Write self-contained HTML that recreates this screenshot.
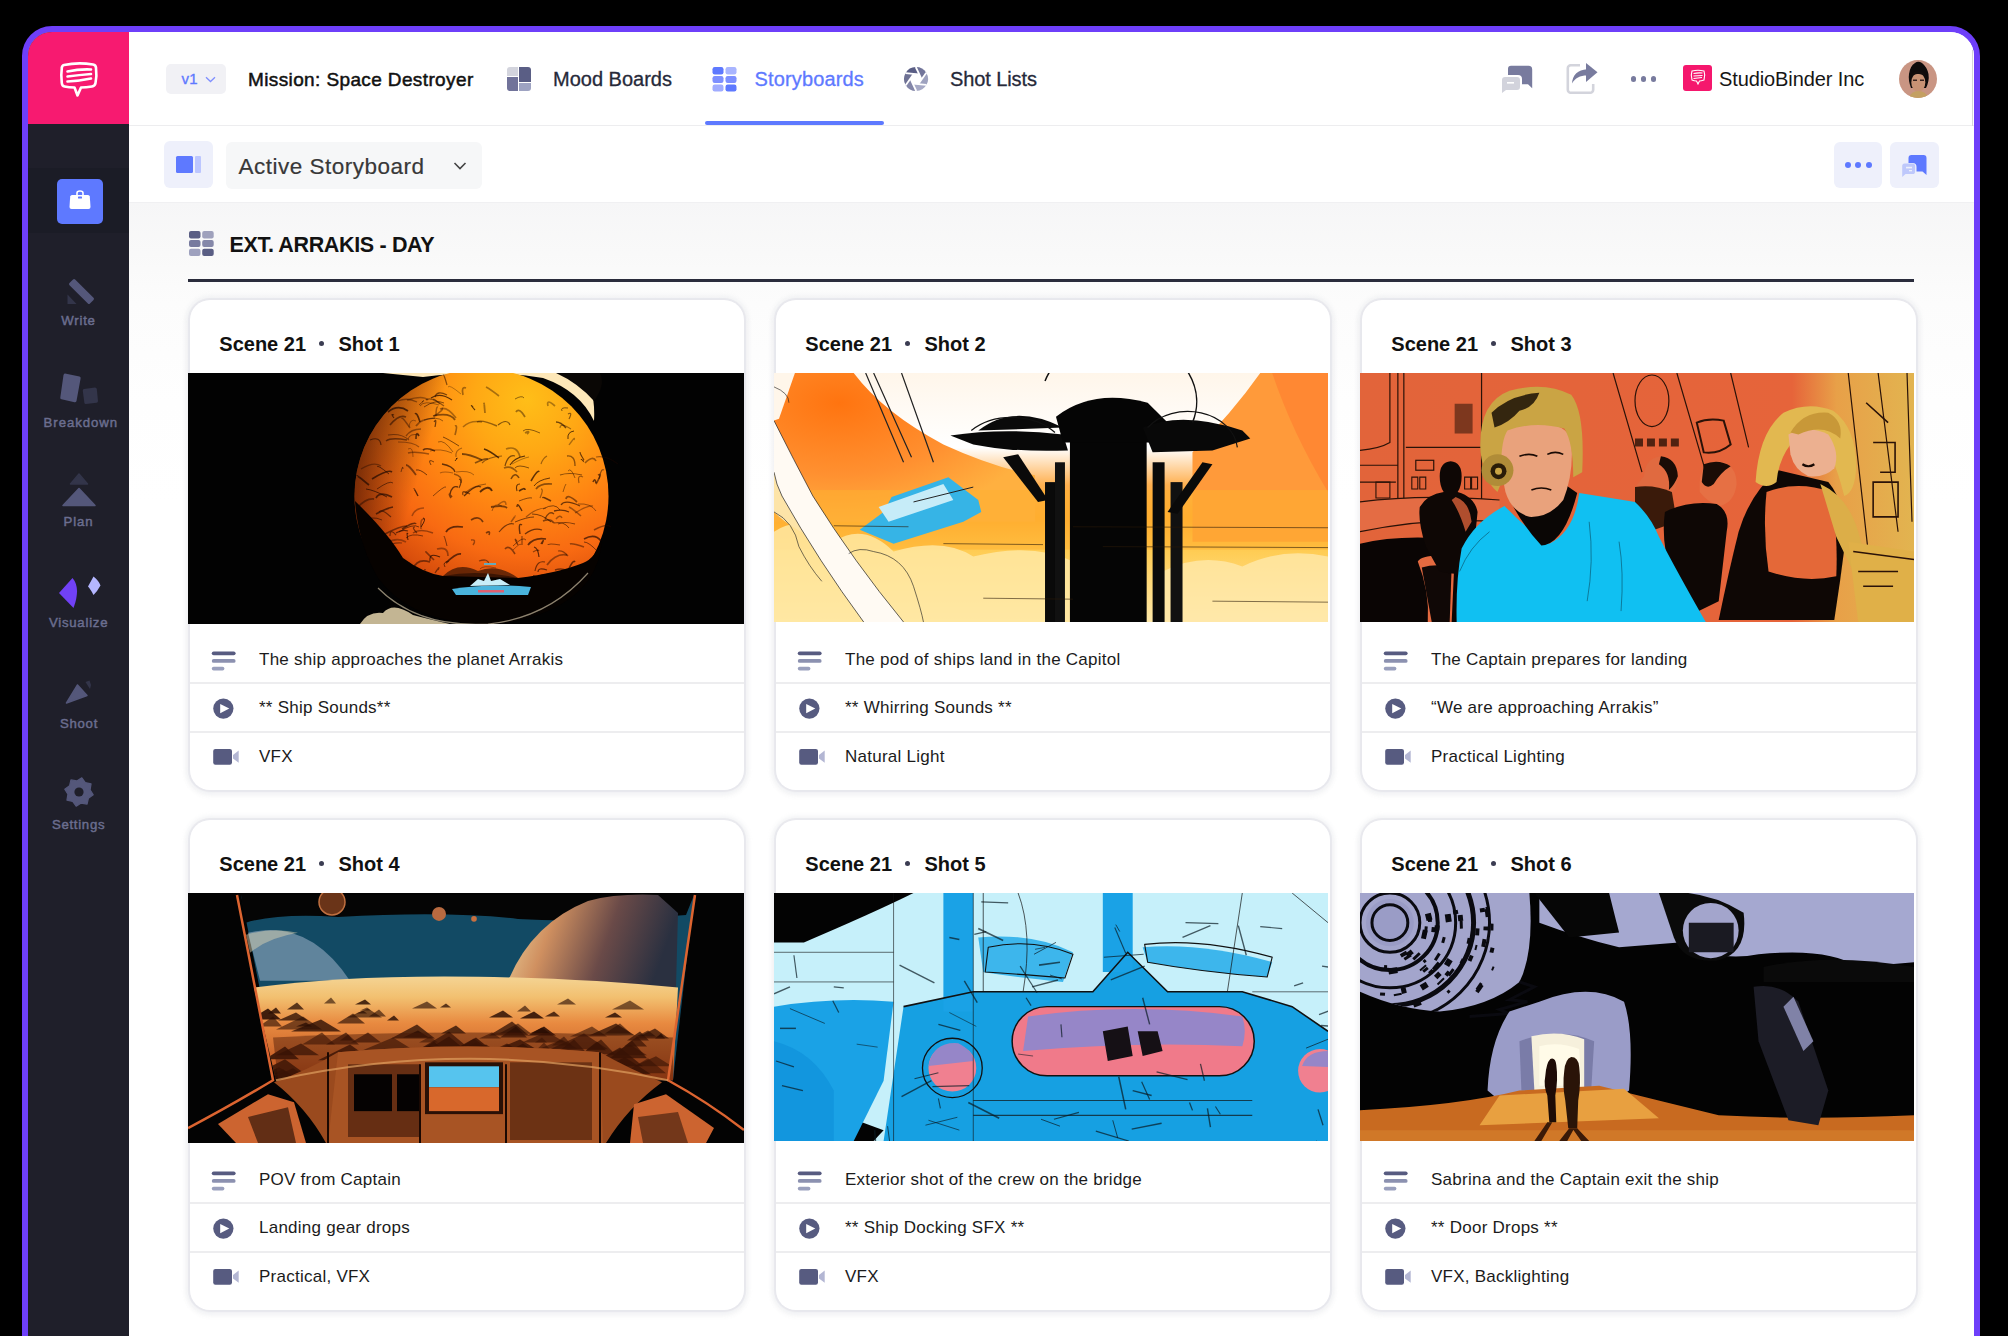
<!DOCTYPE html><html><head><meta charset="utf-8"><style>
*{margin:0;padding:0;box-sizing:border-box}
html,body{width:2008px;height:1336px;overflow:hidden;background:#000}
body{position:relative;font-family:"Liberation Sans",sans-serif}
.frame{position:absolute;left:22px;top:26px;width:1958px;height:1360px;border:6px solid #6e3ffa;border-radius:30px;overflow:hidden;background:#fff}
.inner{position:absolute;left:-28px;top:-32px;width:2008px;height:1336px}
.t{position:absolute;white-space:nowrap;line-height:1}
.r{position:absolute}
svg{position:absolute;overflow:visible}
</style></head><body>
<div class="frame"><div class="inner">
<div class="r" style="left:129px;top:203px;width:1845px;height:1133px;background:linear-gradient(#f6f6f7 0px,#f9f9f9 50px,#fcfcfc 100px,#fefefe 200px,#fff 300px);"></div>
<div class="r" style="left:129px;top:32px;width:1845px;height:93px;background:#fff;"></div>
<div class="r" style="left:129px;top:125px;width:1845px;height:1px;background:#ededef;"></div>
<div class="r" style="left:1972px;top:50px;width:1.2px;height:76px;background:#d6d6d8;"></div>
<div class="r" style="left:129px;top:126px;width:1845px;height:77px;background:#fff;"></div>
<div class="r" style="left:129px;top:202px;width:1845px;height:1px;background:#f0f0f2;"></div>
<div class="r" style="left:28px;top:32px;width:101px;height:1304px;background:#1f1f2a;"></div>
<div class="r" style="left:28px;top:168px;width:101px;height:65px;background:#1b1c26;"></div>
<div class="r" style="left:28px;top:32px;width:101px;height:92.4px;background:#f71a70;"></div>
<svg style="left:60px;top:62px" width="38" height="36" viewBox="0 0 38 36"><path d="M4 3 Q18 0 33 2.5 Q36 3 36 6 Q37 14 35.5 21 Q35 24 32 24.5 Q26 25.5 21 25.5 L17.5 33.5 L14.5 25.5 Q9 25.5 4.5 24.5 Q2 24 1.8 21 Q0.8 13 1.8 6 Q2 3.5 4 3Z" fill="none" stroke="#fff" stroke-width="2.6" stroke-linejoin="round"/><path d="M7.5 9.5 Q19 7 31 7.5 M7.5 14.5 Q19 13 31 12 M7.5 19.5 Q19 19 31 16.5" fill="none" stroke="#fff" stroke-width="2.6" stroke-linecap="round"/></svg>
<div class="r" style="left:57px;top:179px;width:46px;height:45px;background:#5e79ff;border-radius:5px"></div>
<svg style="left:69px;top:190px" width="22" height="20" viewBox="0 0 22 20"><path d="M8 5 V3 Q8 1 11 1 Q14 1 14 3 V5" fill="none" stroke="#fff" stroke-width="1.6"/><path d="M3 5 H19 Q20.5 5 20.8 6.5 L21.5 17 Q21.5 19 19.5 19 H2.5 Q0.5 19 0.5 17 L1.2 6.5 Q1.5 5 3 5Z" fill="#fff"/><rect x="9" y="6.5" width="4" height="2" rx="0.6" fill="#5e79ff"/></svg>
<svg style="left:64px;top:276px" width="32" height="32" viewBox="0 0 32 32"><rect x="-14.5" y="-4" width="29" height="8" rx="1.5" fill="#54577a" transform="translate(17.5,15.5) rotate(45)"/><path d="M3.5 18.5 L12.5 28 H3.5Z" fill="#33354a"/></svg>
<svg style="left:58px;top:371px" width="44" height="36" viewBox="0 0 44 36"><path d="M7 2.5 L21.5 5.5 Q23 6 22.6 7.6 L18.5 30 Q18 31.5 16.5 31.2 L3.5 28.3 Q2 28 2.3 26.4 L5.5 4 Q6 2.3 7 2.5Z" fill="#54577a"/><path d="M26 18 L37 16.5 Q38.5 16.5 38.8 18 L40 30 Q40 31.5 38.5 31.7 L28 33 Q26.5 33 26.3 31.5 L24.8 19.7 Q24.7 18.2 26 18Z" fill="#33354a"/></svg>
<svg style="left:60px;top:472px" width="38" height="36" viewBox="0 0 38 36"><path d="M19 2 L27.5 12 H10.5Z" fill="#33354a" stroke="#33354a" stroke-width="1.5" stroke-linejoin="round"/><path d="M19 16.5 L35 33.5 H3Z" fill="#54577a" stroke="#54577a" stroke-width="1.5" stroke-linejoin="round"/></svg>
<svg style="left:57px;top:574px" width="46" height="36" viewBox="0 0 46 36"><path d="M2 19 L15.5 4 Q24 14 16.5 34Z" fill="#7141f6"/><path d="M31 12.5 L36.5 2.5 Q42 7 43.5 11.5 Q40.5 17 36.5 21 Q33.5 15 31 12.5Z" fill="#b4b6ff"/></svg>
<svg style="left:62px;top:678px" width="34" height="30" viewBox="0 0 34 30"><path d="M4.5 25 L15.5 7 L25 17.5Z" fill="#54577a" stroke="#54577a" stroke-width="1.5" stroke-linejoin="round"/><path d="M23.5 4 L27.5 2.5 L29 7 L28 11Z" fill="#33354a"/></svg>
<svg style="left:64px;top:777px" width="30" height="30" viewBox="0 0 30 30"><polygon points="17.83,0.78 21.28,5.60 27.06,6.94 26.08,12.80 29.22,17.83 24.40,21.28 23.06,27.06 17.20,26.08 12.17,29.22 8.72,24.40 2.94,23.06 3.92,17.20 0.78,12.17 5.60,8.72 6.94,2.94 12.80,3.92" fill="#54577a" stroke="#54577a" stroke-width="1.2" stroke-linejoin="round"/><circle cx="15" cy="15" r="4.6" fill="#1f1f2a"/></svg>
<div class="t" style="left:-21.5px;width:200px;text-align:center;top:313.83px;font-size:13.2px;font-weight:400;color:#6b6e8f;letter-spacing:0.75px;-webkit-text-stroke:0.45px #6b6e8f;">Write</div>
<div class="t" style="left:-19.200000000000003px;width:200px;text-align:center;top:415.53px;font-size:13.2px;font-weight:400;color:#6b6e8f;letter-spacing:0.95px;-webkit-text-stroke:0.45px #6b6e8f;">Breakdown</div>
<div class="t" style="left:-21.5px;width:200px;text-align:center;top:514.83px;font-size:13.2px;font-weight:400;color:#6b6e8f;letter-spacing:0.85px;-webkit-text-stroke:0.45px #6b6e8f;">Plan</div>
<div class="t" style="left:-21.400000000000006px;width:200px;text-align:center;top:615.53px;font-size:13.2px;font-weight:400;color:#6b6e8f;letter-spacing:0.75px;-webkit-text-stroke:0.45px #6b6e8f;">Visualize</div>
<div class="t" style="left:-21px;width:200px;text-align:center;top:716.83px;font-size:13.2px;font-weight:400;color:#6b6e8f;letter-spacing:0.75px;-webkit-text-stroke:0.45px #6b6e8f;">Shoot</div>
<div class="t" style="left:-21.400000000000006px;width:200px;text-align:center;top:817.83px;font-size:13.2px;font-weight:400;color:#6b6e8f;letter-spacing:0.7px;-webkit-text-stroke:0.45px #6b6e8f;">Settings</div>
<div class="r" style="left:166px;top:64px;width:60px;height:30px;background:#f1f1f5;border-radius:5px"></div>
<div class="t " style="left:181.5px;top:71.30px;font-size:15px;font-weight:400;color:#5e79ff;letter-spacing:0.3px;-webkit-text-stroke:0.35px #5e79ff;">v1</div>
<svg style="left:205px;top:76px" width="11" height="7" viewBox="0 0 11 7"><path d="M1 1.2 L5.5 5.5 L10 1.2" fill="none" stroke="#8090ff" stroke-width="1.3"/></svg>
<div class="t " style="left:248px;top:69.92px;font-size:19px;font-weight:400;color:#111;letter-spacing:0.38px;-webkit-text-stroke:0.5px #111;">Mission: Space Destroyer</div>
<svg style="left:507px;top:67px" width="24" height="24" viewBox="0 0 24 24"><path d="M3 0 H11 V9 H0 V3 A3 3 0 0 1 3 0Z" fill="#d3d4dd"/><path d="M12 0 H21 A3 3 0 0 1 24 3 V15 H12Z" fill="#5a5e85"/><path d="M0 10 H11 V24 H3 A3 3 0 0 1 0 21Z" fill="#71739a"/><path d="M12 16 H24 V21 A3 3 0 0 1 21 24 H12Z" fill="#9ea3c2"/></svg>
<div class="t " style="left:553px;top:69.07px;font-size:20px;font-weight:400;color:#262939;letter-spacing:0.0px;-webkit-text-stroke:0.3px #262939;">Mood Boards</div>
<svg style="left:712px;top:67px" width="25" height="25" viewBox="0 0 25 25"><rect x="0.5" y="0" width="11" height="7.5" rx="2.2" fill="#5e79ff"/><rect x="13.5" y="0" width="11" height="7.5" rx="2.2" fill="#a9b5ff"/><rect x="0.5" y="9" width="11" height="7" rx="2.2" fill="#7d8fff"/><rect x="13.5" y="9" width="11" height="7" rx="2.2" fill="#7d8fff"/><rect x="0.5" y="17.5" width="11" height="7" rx="2.2" fill="#a0acff"/><rect x="13.5" y="17.5" width="11" height="7" rx="2.2" fill="#5e79ff"/></svg>
<div class="t " style="left:754.5px;top:69.07px;font-size:20px;font-weight:400;color:#5e79ff;letter-spacing:0.15px;-webkit-text-stroke:0.3px #5e79ff;">Storyboards</div>
<div class="r" style="left:705px;top:120.5px;width:179px;height:4.5px;background:#5e79ff;border-radius:2px"></div>
<svg style="left:904px;top:67px" width="24" height="24" viewBox="-12 -12 24 24"><g transform="scale(-1,1)"><path d="M3.21 4.59 L-0.24 12.00 A12 12 0 0 1 -10.51 5.79 L-2.37 5.08 Z" fill="#a7aac6"/><path d="M-2.37 5.08 L-10.51 5.79 A12 12 0 0 1 -10.27 -6.21 L-5.58 0.49 Z" fill="#9ea2bf"/><path d="M-5.58 0.49 L-10.27 -6.21 A12 12 0 0 1 0.24 -12.00 L-3.21 -4.59 Z" fill="#72759a"/><path d="M-3.21 -4.59 L0.24 -12.00 A12 12 0 0 1 10.51 -5.79 L2.37 -5.08 Z" fill="#5a5e85"/><path d="M2.37 -5.08 L10.51 -5.79 A12 12 0 0 1 10.27 6.21 L5.58 -0.49 Z" fill="#6e7194"/><path d="M5.58 -0.49 L10.27 6.21 A12 12 0 0 1 -0.24 12.00 L3.21 4.59 Z" fill="#8386a8"/><line x1="5.58" y1="-0.49" x2="-0.24" y2="12.00" stroke="#fff" stroke-width="1.8"/><line x1="3.21" y1="4.59" x2="-10.51" y2="5.79" stroke="#fff" stroke-width="1.8"/><line x1="-2.37" y1="5.08" x2="-10.27" y2="-6.21" stroke="#fff" stroke-width="1.8"/><line x1="-5.58" y1="0.49" x2="0.24" y2="-12.00" stroke="#fff" stroke-width="1.8"/><line x1="-3.21" y1="-4.59" x2="10.51" y2="-5.79" stroke="#fff" stroke-width="1.8"/><line x1="2.37" y1="-5.08" x2="10.27" y2="6.21" stroke="#fff" stroke-width="1.8"/></g></svg>
<div class="t " style="left:950px;top:69.07px;font-size:20px;font-weight:400;color:#262939;letter-spacing:-0.1px;-webkit-text-stroke:0.3px #262939;">Shot Lists</div>
<svg style="left:1502px;top:65px" width="31" height="28" viewBox="0 0 31 28"><path d="M9 0.8 H26.5 A3.7 3.7 0 0 1 30.2 4.5 V23.2 L26 19.2 H20 V14 A4 4 0 0 0 16 10 H6 V3.8 A3 3 0 0 1 9 0.8Z" fill="#787b9e"/><path d="M3 12 H15 A3 3 0 0 1 18 15 V22 A3 3 0 0 1 15 25 H4 L0 28 V15 A3 3 0 0 1 3 12Z" fill="#d2d3dc"/><rect x="5" y="17" width="7" height="1.6" fill="#fff"/></svg>
<svg style="left:1560px;top:60px" width="40" height="36" viewBox="0 0 40 36"><path d="M20 5.3 H11 A3 3 0 0 0 7.8 8.5 V29.5 A3 3 0 0 0 11 32.7 H30 A3 3 0 0 0 33.2 29.5 V24" fill="none" stroke="#d3d4dc" stroke-width="2.6"/><path d="M26 3 L37.5 12.3 L26 22Z" fill="#787b9e"/><path d="M12 23.5 C12.5 15 18 9.8 27 9.3 V15.5 C20 15.5 15 18 12 23.5Z" fill="#787b9e"/></svg>
<div class="r" style="left:1630.7px;top:76px;width:5.6px;height:5.6px;border-radius:50%;background:#787b9e"></div>
<div class="r" style="left:1640.7px;top:76px;width:5.6px;height:5.6px;border-radius:50%;background:#787b9e"></div>
<div class="r" style="left:1650.7px;top:76px;width:5.6px;height:5.6px;border-radius:50%;background:#787b9e"></div>
<div class="r" style="left:1683px;top:65px;width:29px;height:26px;background:#f5176d;border-radius:3px"></div>
<svg style="left:1689px;top:69px" width="18" height="18" viewBox="0 0 18 18"><path d="M3 2 Q9 0.5 15 2 Q16.5 6 15 11 Q12 12 10.5 12 L9 15 L7.5 12 Q5 12 3 11 Q1.5 6 3 2Z" fill="none" stroke="#fff" stroke-width="1.1"/><path d="M4.5 4.5 Q9 3.5 13.5 4 M4.5 7 Q9 6.5 13.5 6.5 M4.5 9.5 Q9 9 13 8.5" fill="none" stroke="#fff" stroke-width="1.1"/></svg>
<div class="t " style="left:1719px;top:69.07px;font-size:20px;font-weight:400;color:#161616;letter-spacing:-0.1px;">StudioBinder Inc</div>
<div class="r" style="left:1899px;top:59.5px;width:38px;height:38px;border-radius:50%;overflow:hidden;background:#c99583"><svg style="left:0;top:0" width="38" height="38" viewBox="0 0 38 38"><path d="M12 28 Q9 20 10 14 Q11 6 16 3 Q19 0.5 23 3 Q28 7 29.5 14 Q30.5 21 27 28Z" fill="#0e0b0b"/><ellipse cx="19.3" cy="22.5" rx="7" ry="9.5" fill="#c89274"/><path d="M12 17 Q13 11 19 11 Q26 11 27 17 Q23 13.5 19 14 Q15 13.5 12 17Z" fill="#120d0c"/><rect x="14" y="19.5" width="4" height="1.5" fill="#3a2420"/><rect x="21" y="19.5" width="4" height="1.5" fill="#3a2420"/><path d="M10 38 Q12 31 19.3 31 Q27 31 29 38Z" fill="#c4a062"/></svg></div>
<div class="r" style="left:164px;top:141px;width:49px;height:47px;background:#eef0fb;border-radius:6px"></div>
<div class="r" style="left:176px;top:156px;width:16.5px;height:17px;background:#5e79ff;border-radius:1.5px"></div>
<div class="r" style="left:195px;top:156px;width:6px;height:17px;background:#bcc6ff;border-radius:1px"></div>
<div class="r" style="left:226px;top:142px;width:256px;height:47px;background:#f6f7f8;border-radius:6px"></div>
<div class="t " style="left:238.5px;top:155.95px;font-size:22.5px;font-weight:400;color:#383838;letter-spacing:0.5px;-webkit-text-stroke:0.2px #383838;">Active Storyboard</div>
<svg style="left:453px;top:161px" width="14" height="10" viewBox="0 0 14 10"><path d="M1.5 2 L7 7.5 L12.5 2" fill="none" stroke="#444" stroke-width="1.6"/></svg>
<div class="r" style="left:1834px;top:142px;width:48px;height:46px;background:#eef0fb;border-radius:6px"></div>
<div class="r" style="left:1844.5px;top:162px;width:6px;height:6px;border-radius:50%;background:#5e79ff"></div>
<div class="r" style="left:1855.2px;top:162px;width:6px;height:6px;border-radius:50%;background:#5e79ff"></div>
<div class="r" style="left:1865.9px;top:162px;width:6px;height:6px;border-radius:50%;background:#5e79ff"></div>
<div class="r" style="left:1890px;top:142px;width:48.5px;height:46px;background:#eef0fb;border-radius:6px"></div>
<svg style="left:1902px;top:154px" width="26" height="24" viewBox="0 0 26 24"><path d="M9.5 1 H21.5 A3 3 0 0 1 24.5 4 V21 L20.5 17.5 H14.5 V13 A4 4 0 0 0 10.5 9 H6.5 V4 A3 3 0 0 1 9.5 1Z" fill="#5e79ff"/><path d="M3 9.5 H10.5 A2.6 2.6 0 0 1 13.1 12.1 V17.5 A2.6 2.6 0 0 1 10.5 20.1 H3.5 L0.2 23 V12.1 A2.6 2.6 0 0 1 3 9.5Z" fill="#bec8fb"/><rect x="4" y="12.8" width="6" height="1.6" fill="#eef0fb"/><rect x="7" y="16" width="3" height="1.3" fill="#eef0fb"/></svg>
<svg style="left:189px;top:231px" width="25" height="25" viewBox="0 0 25 25"><rect x="0" y="0" width="11.5" height="7.5" rx="2" fill="#5a5e84"/><rect x="13.2" y="0" width="11.5" height="7.5" rx="2" fill="#9fa1bc"/><rect x="0" y="9" width="11.5" height="7" rx="2" fill="#777a9e"/><rect x="13.2" y="9" width="11.5" height="7" rx="2" fill="#8588a9"/><rect x="0" y="17.8" width="11.5" height="7.2" rx="2" fill="#9ea1be"/><rect x="13.2" y="17.8" width="11.5" height="7.2" rx="2" fill="#5a5e84"/></svg>
<div class="t " style="left:229.5px;top:234.80px;font-size:21.5px;font-weight:700;color:#121212;letter-spacing:-0.35px;">EXT. ARRAKIS - DAY</div>
<div class="r" style="left:188px;top:279px;width:1726px;height:3px;background:#2a2c3c;"></div>
<div class="r" style="left:190px;top:300px;width:554px;height:490px;background:#fff;border-radius:20px;box-shadow:0 0 0 2px rgba(226,227,233,0.6),0 0 5px 4px rgba(226,227,233,0.4),0 3px 9px 2px rgba(40,40,70,0.035)"></div>
<svg style="left:188px;top:373px" width="556" height="251" viewBox="0 0 556 251" preserveAspectRatio="none"><defs><clipPath id="cl0"><rect width="556" height="251"/></clipPath></defs><g clip-path="url(#cl0)"><rect width="556" height="251" fill="#020202"/><defs><radialGradient id="pl1" cx="0.68" cy="0.12" r="0.95"><stop offset="0" stop-color="#ffbe18"/><stop offset="0.22" stop-color="#ffa814"/><stop offset="0.45" stop-color="#ff8612"/><stop offset="0.65" stop-color="#f86a12"/><stop offset="0.82" stop-color="#d84e0c"/><stop offset="1" stop-color="#3a1002"/></radialGradient></defs><path d="M195 0 H392 Q408 14 406 48 Q392 18 355 5 Q300 -4 235 4 Z" fill="#fde7b8"/><path d="M368 0 H412 Q418 12 406 28 Q390 10 368 0Z" fill="#0a0705"/><path d="M172 251 Q180 238 195 240 Q205 228 225 242 Q240 246 262 251Z" fill="#f4e2b8" opacity="0.8"/><circle cx="293.5" cy="123" r="127" fill="url(#pl1)"/><path d="M251 32 q-15 -5 -19 1" fill="none" stroke="#1e0800" stroke-width="0.8" opacity="0.50"/><path d="M278 15 q-5 -2 -3 7" fill="none" stroke="#1e0800" stroke-width="1.7" opacity="0.40"/><path d="M314 83 q-14 1 -20 7" fill="none" stroke="#1e0800" stroke-width="1.1" opacity="0.47"/><path d="M374 38 q-2 -4 6 -3" fill="none" stroke="#1e0800" stroke-width="1.0" opacity="0.57"/><path d="M316 95 q7 -3 13 4" fill="none" stroke="#1e0800" stroke-width="1.7" opacity="0.45"/><path d="M352 60 q-13 -6 -17 -2" fill="none" stroke="#1e0800" stroke-width="0.8" opacity="0.65"/><path d="M337 161 q9 -7 17 -4" fill="none" stroke="#1e0800" stroke-width="1.3" opacity="0.63"/><path d="M380 198 q5 -12 7 -9" fill="none" stroke="#1e0800" stroke-width="1.6" opacity="0.63"/><path d="M241 81 q-15 -3 -21 -1" fill="none" stroke="#1e0800" stroke-width="1.6" opacity="0.42"/><path d="M202 52 q9 -11 16 -8" fill="none" stroke="#1e0800" stroke-width="1.6" opacity="0.53"/><path d="M386 58 q-7 1 -6 8" fill="none" stroke="#1e0800" stroke-width="1.0" opacity="0.73"/><path d="M228 102 q-7 -10 -10 -10" fill="none" stroke="#1e0800" stroke-width="1.8" opacity="0.52"/><path d="M343 108 q7 -12 8 -9" fill="none" stroke="#1e0800" stroke-width="1.6" opacity="0.71"/><path d="M268 84 q-1 -7 6 -9" fill="none" stroke="#1e0800" stroke-width="1.1" opacity="0.38"/><path d="M389 129 q-10 -9 -11 -3" fill="none" stroke="#1e0800" stroke-width="1.8" opacity="0.50"/><path d="M286 102 q-5 -5 -18 -3" fill="none" stroke="#1e0800" stroke-width="0.8" opacity="0.46"/><path d="M408 111 q7 -12 2 -9" fill="none" stroke="#1e0800" stroke-width="1.5" opacity="0.56"/><path d="M235 77 q4 -3 12 1" fill="none" stroke="#1e0800" stroke-width="1.6" opacity="0.66"/><path d="M372 172 q-12 -2 -12 0" fill="none" stroke="#1e0800" stroke-width="1.1" opacity="0.49"/><path d="M235 145 q4 0 -2 9" fill="none" stroke="#1e0800" stroke-width="1.0" opacity="0.75"/><path d="M227 41 q2 -2 5 8" fill="none" stroke="#1e0800" stroke-width="1.6" opacity="0.69"/><path d="M191 139 q2 -4 12 5" fill="none" stroke="#1e0800" stroke-width="1.1" opacity="0.54"/><path d="M370 204 q-6 2 -4 9" fill="none" stroke="#1e0800" stroke-width="1.0" opacity="0.64"/><path d="M396 169 q5 -0 14 10" fill="none" stroke="#1e0800" stroke-width="0.9" opacity="0.61"/><path d="M332 111 q-5 0 -3 7" fill="none" stroke="#1e0800" stroke-width="1.1" opacity="0.68"/><path d="M230 123 q-4 -8 -4 -7" fill="none" stroke="#1e0800" stroke-width="1.4" opacity="0.71"/><path d="M396 88 q-6 -4 0 1" fill="none" stroke="#1e0800" stroke-width="1.0" opacity="0.56"/><path d="M213 99 q2 -8 2 -3" fill="none" stroke="#1e0800" stroke-width="0.9" opacity="0.56"/><path d="M310 52 q9 -7 12 0" fill="none" stroke="#1e0800" stroke-width="1.2" opacity="0.57"/><path d="M323 106 q4 -8 8 -1" fill="none" stroke="#1e0800" stroke-width="1.5" opacity="0.56"/><path d="M389 198 q-3 2 3 9" fill="none" stroke="#1e0800" stroke-width="1.2" opacity="0.69"/><path d="M188 141 q11 -6 17 -7" fill="none" stroke="#1e0800" stroke-width="1.7" opacity="0.64"/><path d="M408 84 q10 -2 22 7" fill="none" stroke="#1e0800" stroke-width="1.1" opacity="0.41"/><path d="M219 67 q-16 -3 -21 1" fill="none" stroke="#1e0800" stroke-width="1.4" opacity="0.53"/><path d="M298 14 q4 2 13 9" fill="none" stroke="#1e0800" stroke-width="1.6" opacity="0.39"/><path d="M238 27 q5 -4 18 6" fill="none" stroke="#1e0800" stroke-width="1.4" opacity="0.45"/><path d="M405 133 q-5 -1 -18 7" fill="none" stroke="#1e0800" stroke-width="1.1" opacity="0.38"/><path d="M308 195 q-13 -3 -16 1" fill="none" stroke="#1e0800" stroke-width="0.9" opacity="0.45"/><path d="M220 66 q2 -6 11 -4" fill="none" stroke="#1e0800" stroke-width="0.8" opacity="0.55"/><path d="M353 116 q3 -0 -1 9" fill="none" stroke="#1e0800" stroke-width="1.3" opacity="0.39"/><path d="M379 83 q8 -1 8 10" fill="none" stroke="#1e0800" stroke-width="1.4" opacity="0.49"/><path d="M271 73 q-11 -7 -16 -9" fill="none" stroke="#1e0800" stroke-width="0.9" opacity="0.65"/><path d="M380 183 q-5 -6 -10 -5" fill="none" stroke="#1e0800" stroke-width="1.2" opacity="0.47"/><path d="M236 202 q-1 -7 2 -5" fill="none" stroke="#1e0800" stroke-width="0.8" opacity="0.74"/><path d="M265 100 q-9 -2 -13 0" fill="none" stroke="#1e0800" stroke-width="1.2" opacity="0.35"/><path d="M246 49 q3 -5 1 5" fill="none" stroke="#1e0800" stroke-width="1.2" opacity="0.61"/><path d="M252 207 q9 -6 10 3" fill="none" stroke="#1e0800" stroke-width="1.4" opacity="0.37"/><path d="M353 171 q4 -7 1 0" fill="none" stroke="#1e0800" stroke-width="1.4" opacity="0.68"/><path d="M393 143 q-8 -7 -12 -9" fill="none" stroke="#1e0800" stroke-width="1.6" opacity="0.40"/><path d="M310 132 q8 -7 8 -0" fill="none" stroke="#1e0800" stroke-width="1.3" opacity="0.35"/><path d="M304 138 q2 -9 10 -5" fill="none" stroke="#1e0800" stroke-width="1.0" opacity="0.38"/><path d="M355 205 q1 -6 -5 -0" fill="none" stroke="#1e0800" stroke-width="1.4" opacity="0.62"/><path d="M233 156 q-1 -11 3 -10" fill="none" stroke="#1e0800" stroke-width="1.5" opacity="0.37"/><path d="M339 61 q4 -4 -2 -1" fill="none" stroke="#1e0800" stroke-width="1.8" opacity="0.40"/><path d="M285 172 q4 -6 -2 -5" fill="none" stroke="#1e0800" stroke-width="1.4" opacity="0.43"/><path d="M205 110 q-3 -3 -16 6" fill="none" stroke="#1e0800" stroke-width="1.0" opacity="0.55"/><path d="M394 102 q-13 -3 -22 -0" fill="none" stroke="#1e0800" stroke-width="1.1" opacity="0.53"/><path d="M249 176 q11 -3 11 7" fill="none" stroke="#1e0800" stroke-width="1.7" opacity="0.40"/><path d="M242 78 q10 -3 22 2" fill="none" stroke="#1e0800" stroke-width="0.8" opacity="0.49"/><path d="M195 175 q10 -6 19 -5" fill="none" stroke="#1e0800" stroke-width="1.2" opacity="0.46"/><path d="M373 132 q4 -6 19 1" fill="none" stroke="#1e0800" stroke-width="1.3" opacity="0.64"/><path d="M358 135 q-10 0 -20 9" fill="none" stroke="#1e0800" stroke-width="1.1" opacity="0.40"/><path d="M355 205 q2 -5 7 -4" fill="none" stroke="#1e0800" stroke-width="1.0" opacity="0.57"/><path d="M222 190 q-7 1 -12 8" fill="none" stroke="#1e0800" stroke-width="1.0" opacity="0.75"/><path d="M193 72 q-1 -9 -11 -5" fill="none" stroke="#1e0800" stroke-width="1.2" opacity="0.58"/><path d="M273 110 q2 -7 -7 -9" fill="none" stroke="#1e0800" stroke-width="1.3" opacity="0.46"/><path d="M327 181 q-6 -10 -10 -5" fill="none" stroke="#1e0800" stroke-width="1.6" opacity="0.51"/><path d="M178 149 q-2 -7 -1 2" fill="none" stroke="#1e0800" stroke-width="1.6" opacity="0.35"/><path d="M384 204 q-6 -11 -17 -7" fill="none" stroke="#1e0800" stroke-width="1.5" opacity="0.56"/><path d="M332 161 q-2 -12 2 -9" fill="none" stroke="#1e0800" stroke-width="1.4" opacity="0.66"/><path d="M246 27 q-2 -3 6 4" fill="none" stroke="#1e0800" stroke-width="1.4" opacity="0.39"/><path d="M267 47 q-5 -8 -22 -4" fill="none" stroke="#1e0800" stroke-width="1.7" opacity="0.53"/><path d="M289 49 q4 -3 20 4" fill="none" stroke="#1e0800" stroke-width="1.5" opacity="0.47"/><path d="M275 54 q7 -7 19 -5" fill="none" stroke="#1e0800" stroke-width="1.5" opacity="0.36"/><path d="M220 167 q-2 -10 0 -6" fill="none" stroke="#1e0800" stroke-width="1.0" opacity="0.74"/><path d="M225 160 q7 -5 20 -0" fill="none" stroke="#1e0800" stroke-width="1.5" opacity="0.42"/><path d="M268 45 q-9 -12 -16 -9" fill="none" stroke="#1e0800" stroke-width="1.7" opacity="0.37"/><path d="M353 209 q-1 -5 -8 -6" fill="none" stroke="#1e0800" stroke-width="1.5" opacity="0.72"/><path d="M265 79 q-9 -13 -15 -10" fill="none" stroke="#1e0800" stroke-width="0.9" opacity="0.46"/><path d="M259 173 q-3 -12 -3 -9" fill="none" stroke="#1e0800" stroke-width="1.0" opacity="0.54"/><path d="M261 188 q-7 1 -4 6" fill="none" stroke="#1e0800" stroke-width="0.9" opacity="0.66"/><path d="M357 189 q-8 -2 -10 9" fill="none" stroke="#1e0800" stroke-width="1.1" opacity="0.60"/><path d="M359 192 q9 -12 20 -10" fill="none" stroke="#1e0800" stroke-width="1.8" opacity="0.44"/><path d="M267 53 q3 -2 -0 9" fill="none" stroke="#1e0800" stroke-width="1.6" opacity="0.42"/><path d="M363 128 q-9 -5 -8 -3" fill="none" stroke="#1e0800" stroke-width="1.6" opacity="0.66"/><path d="M178 116 q8 1 21 8" fill="none" stroke="#1e0800" stroke-width="0.9" opacity="0.75"/><path d="M295 149 q-4 -7 -12 -2" fill="none" stroke="#1e0800" stroke-width="1.6" opacity="0.60"/><path d="M336 25 q-2 -3 -9 1" fill="none" stroke="#1e0800" stroke-width="1.0" opacity="0.50"/><path d="M231 32 q8 -7 3 -3" fill="none" stroke="#1e0800" stroke-width="1.0" opacity="0.51"/><path d="M372 137 q-5 -8 -17 -1" fill="none" stroke="#1e0800" stroke-width="0.8" opacity="0.68"/><path d="M243 25 q9 -6 21 2" fill="none" stroke="#1e0800" stroke-width="1.2" opacity="0.72"/><path d="M235 163 q-12 -3 -17 2" fill="none" stroke="#1e0800" stroke-width="0.9" opacity="0.60"/><path d="M221 54 q1 -9 7 -6" fill="none" stroke="#1e0800" stroke-width="1.0" opacity="0.35"/><path d="M248 43 q-0 -10 2 -9" fill="none" stroke="#1e0800" stroke-width="1.4" opacity="0.39"/><path d="M247 200 q6 -9 3 -3" fill="none" stroke="#1e0800" stroke-width="1.2" opacity="0.52"/><path d="M219 153 q-7 -0 -22 8" fill="none" stroke="#1e0800" stroke-width="1.7" opacity="0.52"/><path d="M285 34 q-4 -4 2 3" fill="none" stroke="#1e0800" stroke-width="1.2" opacity="0.71"/><path d="M296 31 q0 -3 1 9" fill="none" stroke="#1e0800" stroke-width="1.8" opacity="0.39"/><path d="M219 27 q16 -5 21 -0" fill="none" stroke="#1e0800" stroke-width="1.7" opacity="0.37"/><path d="M325 173 q10 -10 13 -6" fill="none" stroke="#1e0800" stroke-width="1.0" opacity="0.51"/><path d="M225 84 q0 -11 -5 -8" fill="none" stroke="#1e0800" stroke-width="0.8" opacity="0.45"/><path d="M311 159 q8 -10 15 -8" fill="none" stroke="#1e0800" stroke-width="1.1" opacity="0.59"/><path d="M275 122 q-2 -6 7 -1" fill="none" stroke="#1e0800" stroke-width="1.3" opacity="0.53"/><path d="M229 160 q-6 -6 -2 -6" fill="none" stroke="#1e0800" stroke-width="1.2" opacity="0.54"/><path d="M193 93 q-7 -5 -20 3" fill="none" stroke="#1e0800" stroke-width="1.3" opacity="0.38"/><path d="M184 106 q16 -10 20 -7" fill="none" stroke="#1e0800" stroke-width="1.6" opacity="0.69"/><path d="M218 206 q14 -3 20 8" fill="none" stroke="#1e0800" stroke-width="0.9" opacity="0.42"/><path d="M258 159 q4 -7 17 -5" fill="none" stroke="#1e0800" stroke-width="1.7" opacity="0.68"/><path d="M222 55 q-8 -12 -8 -9" fill="none" stroke="#1e0800" stroke-width="1.5" opacity="0.42"/><path d="M303 134 q13 -2 16 1" fill="none" stroke="#1e0800" stroke-width="1.8" opacity="0.58"/><path d="M327 83 q-7 -2 -10 10" fill="none" stroke="#1e0800" stroke-width="1.2" opacity="0.58"/><path d="M214 156 q13 -8 14 -5" fill="none" stroke="#1e0800" stroke-width="1.5" opacity="0.61"/><path d="M324 91 q11 -6 17 -7" fill="none" stroke="#1e0800" stroke-width="0.8" opacity="0.44"/><path d="M259 22 q-10 -5 -12 2" fill="none" stroke="#1e0800" stroke-width="1.3" opacity="0.59"/><path d="M204 197 q-3 -11 -15 -8" fill="none" stroke="#1e0800" stroke-width="1.2" opacity="0.61"/><path d="M331 118 q6 -4 6 -1" fill="none" stroke="#1e0800" stroke-width="1.7" opacity="0.72"/><path d="M181 112 q-12 -10 -12 -9" fill="none" stroke="#1e0800" stroke-width="1.7" opacity="0.66"/><path d="M206 42 q-4 -2 0 3" fill="none" stroke="#1e0800" stroke-width="1.1" opacity="0.68"/><path d="M366 150 q10 -2 15 5" fill="none" stroke="#1e0800" stroke-width="1.0" opacity="0.54"/><path d="M357 146 q4 -9 9 -5" fill="none" stroke="#1e0800" stroke-width="1.3" opacity="0.57"/><path d="M236 135 q-9 0 -12 8" fill="none" stroke="#1e0800" stroke-width="1.5" opacity="0.36"/><path d="M406 157 q13 -7 17 -3" fill="none" stroke="#1e0800" stroke-width="1.5" opacity="0.45"/><path d="M336 206 q7 -4 15 4" fill="none" stroke="#1e0800" stroke-width="1.4" opacity="0.69"/><path d="M247 45 q-15 1 -19 8" fill="none" stroke="#1e0800" stroke-width="1.7" opacity="0.41"/><path d="M256 30 q-8 -4 -20 4" fill="none" stroke="#1e0800" stroke-width="0.9" opacity="0.60"/><path d="M318 76 q11 -4 14 8" fill="none" stroke="#1e0800" stroke-width="1.7" opacity="0.38"/><path d="M382 171 q2 -1 14 3" fill="none" stroke="#1e0800" stroke-width="1.6" opacity="0.46"/><path d="M221 67 q-8 -7 -21 -5" fill="none" stroke="#1e0800" stroke-width="1.1" opacity="0.46"/><path d="M411 106 q2 -11 5 -9" fill="none" stroke="#1e0800" stroke-width="1.1" opacity="0.52"/><path d="M346 113 q4 -6 16 -8" fill="none" stroke="#1e0800" stroke-width="1.0" opacity="0.68"/><path d="M361 205 q-4 -5 -0 -0" fill="none" stroke="#1e0800" stroke-width="1.1" opacity="0.67"/><path d="M378 55 q-5 -6 -10 -6" fill="none" stroke="#1e0800" stroke-width="1.4" opacity="0.63"/><path d="M190 165 q5 -3 13 3" fill="none" stroke="#1e0800" stroke-width="1.7" opacity="0.49"/><path d="M192 187 q-6 -7 -13 -5" fill="none" stroke="#1e0800" stroke-width="1.7" opacity="0.71"/><path d="M228 97 q4 -1 11 5" fill="none" stroke="#1e0800" stroke-width="1.0" opacity="0.61"/><path d="M381 139 q-6 -3 -15 -1" fill="none" stroke="#1e0800" stroke-width="1.3" opacity="0.66"/><path d="M218 63 q5 -7 15 -7" fill="none" stroke="#1e0800" stroke-width="1.3" opacity="0.41"/><path d="M210 69 q16 -0 21 5" fill="none" stroke="#1e0800" stroke-width="1.2" opacity="0.39"/><path d="M353 91 q2 -6 6 -8" fill="none" stroke="#1e0800" stroke-width="1.2" opacity="0.43"/><path d="M368 146 q4 -5 6 -1" fill="none" stroke="#1e0800" stroke-width="1.5" opacity="0.41"/><path d="M397 90 q8 -8 11 -2" fill="none" stroke="#1e0800" stroke-width="1.6" opacity="0.44"/><path d="M345 179 q5 -3 6 -1" fill="none" stroke="#1e0800" stroke-width="1.2" opacity="0.48"/><path d="M366 150 q-4 -5 -11 -2" fill="none" stroke="#1e0800" stroke-width="1.5" opacity="0.53"/><path d="M334 163 q0 2 -0 9" fill="none" stroke="#1e0800" stroke-width="1.6" opacity="0.37"/><path d="M405 109 q2 -5 3 1" fill="none" stroke="#1e0800" stroke-width="1.6" opacity="0.64"/><path d="M300 86 q-3 -1 -13 4" fill="none" stroke="#1e0800" stroke-width="1.8" opacity="0.51"/><path d="M259 12 q-3 -11 -4 -10" fill="none" stroke="#1e0800" stroke-width="1.2" opacity="0.52"/><path d="M236 47 q13 -4 19 1" fill="none" stroke="#1e0800" stroke-width="1.0" opacity="0.44"/><path d="M202 163 q-0 -8 6 -1" fill="none" stroke="#1e0800" stroke-width="1.2" opacity="0.57"/><path d="M330 172 q-5 -9 -1 -4" fill="none" stroke="#1e0800" stroke-width="1.2" opacity="0.57"/><path d="M383 56 q-11 -7 -11 -1" fill="none" stroke="#1e0800" stroke-width="1.1" opacity="0.42"/><path d="M231 63 q-3 -6 -3 3" fill="none" stroke="#1e0800" stroke-width="1.7" opacity="0.61"/><path d="M184 174 q8 -6 12 -7" fill="none" stroke="#1e0800" stroke-width="0.8" opacity="0.68"/><path d="M408 138 q-5 -8 -18 -7" fill="none" stroke="#1e0800" stroke-width="1.0" opacity="0.44"/><path d="M396 166 q11 -6 17 2" fill="none" stroke="#1e0800" stroke-width="1.6" opacity="0.66"/><path d="M380 41 q5 -3 1 5" fill="none" stroke="#1e0800" stroke-width="1.1" opacity="0.53"/><path d="M229 29 q-10 -5 -19 -1" fill="none" stroke="#1e0800" stroke-width="1.3" opacity="0.41"/><path d="M380 98 q3 -4 7 7" fill="none" stroke="#1e0800" stroke-width="0.9" opacity="0.50"/><path d="M329 134 q0 -6 5 4" fill="none" stroke="#1e0800" stroke-width="1.3" opacity="0.72"/><path d="M291 188 q9 -3 10 3" fill="none" stroke="#1e0800" stroke-width="1.3" opacity="0.49"/><path d="M301 162 q2 -5 -3 -2" fill="none" stroke="#1e0800" stroke-width="1.6" opacity="0.57"/><path d="M271 106 q4 1 0 9" fill="none" stroke="#1e0800" stroke-width="1.1" opacity="0.61"/><path d="M245 123 q11 -10 13 -9" fill="none" stroke="#1e0800" stroke-width="0.8" opacity="0.64"/><path d="M217 194 q5 -3 7 6" fill="none" stroke="#1e0800" stroke-width="1.4" opacity="0.71"/><path d="M344 125 q-3 -1 -13 3" fill="none" stroke="#1e0800" stroke-width="1.0" opacity="0.53"/><path d="M179 163 q7 -7 7 -3" fill="none" stroke="#1e0800" stroke-width="1.1" opacity="0.68"/><path d="M246 89 q-7 -4 -3 3" fill="none" stroke="#1e0800" stroke-width="0.8" opacity="0.72"/><path d="M200 170 q8 -6 18 -1" fill="none" stroke="#1e0800" stroke-width="1.7" opacity="0.36"/><path d="M273 21 q-12 -10 -13 -7" fill="none" stroke="#1e0800" stroke-width="0.9" opacity="0.36"/><path d="M231 154 q-6 -4 -20 5" fill="none" stroke="#1e0800" stroke-width="0.9" opacity="0.64"/><path d="M327 149 q12 -5 19 -5" fill="none" stroke="#1e0800" stroke-width="0.8" opacity="0.74"/><path d="M333 172 q0 -3 -8 5" fill="none" stroke="#1e0800" stroke-width="0.9" opacity="0.42"/><path d="M262 121 q2 -9 8 -7" fill="none" stroke="#1e0800" stroke-width="1.4" opacity="0.67"/><path d="M274 81 q7 0 20 6" fill="none" stroke="#1e0800" stroke-width="1.8" opacity="0.58"/><path d="M346 174 q4 1 5 10" fill="none" stroke="#1e0800" stroke-width="1.2" opacity="0.68"/><path d="M392 79 q-0 2 4 8" fill="none" stroke="#1e0800" stroke-width="1.1" opacity="0.67"/><path d="M276 123 q12 -12 17 -9" fill="none" stroke="#1e0800" stroke-width="1.4" opacity="0.68"/><path d="M238 179 q-1 -1 8 8" fill="none" stroke="#1e0800" stroke-width="1.6" opacity="0.49"/><path d="M220 158 q-6 -2 -12 2" fill="none" stroke="#1e0800" stroke-width="1.1" opacity="0.62"/><path d="M358 166 q-12 -2 -18 6" fill="none" stroke="#1e0800" stroke-width="1.7" opacity="0.66"/><path d="M391 110 q-2 -9 4 -6" fill="none" stroke="#1e0800" stroke-width="1.2" opacity="0.43"/><path d="M311 85 q-9 -7 -15 -9" fill="none" stroke="#1e0800" stroke-width="1.4" opacity="0.75"/><path d="M367 33 q-9 -8 -7 0" fill="none" stroke="#1e0800" stroke-width="1.7" opacity="0.36"/><path d="M292 119 q9 -8 12 -1" fill="none" stroke="#1e0800" stroke-width="1.8" opacity="0.73"/><path d="M220 38 q-10 -7 -20 1" fill="none" stroke="#1e0800" stroke-width="1.7" opacity="0.70"/><path d="M186 126 q-8 -1 -17 9" fill="none" stroke="#1e0800" stroke-width="1.8" opacity="0.45"/><path d="M337 83 q-11 2 -15 9" fill="none" stroke="#1e0800" stroke-width="1.1" opacity="0.75"/><path d="M258 190 q10 -10 15 -9" fill="none" stroke="#1e0800" stroke-width="1.8" opacity="0.66"/><path d="M359 197 q-9 -3 -9 2" fill="none" stroke="#1e0800" stroke-width="1.1" opacity="0.65"/><path d="M201 101 q-12 -10 -12 -7" fill="none" stroke="#1e0800" stroke-width="1.0" opacity="0.62"/><path d="M225 196 q4 -11 17 -7" fill="none" stroke="#1e0800" stroke-width="1.6" opacity="0.53"/><path d="M327 95 q3 -4 14 -0" fill="none" stroke="#1e0800" stroke-width="0.9" opacity="0.60"/><path d="M348 116 q4 -6 16 -5" fill="none" stroke="#1e0800" stroke-width="1.6" opacity="0.51"/><path d="M254 35 q2 2 -8 8" fill="none" stroke="#1e0800" stroke-width="1.7" opacity="0.40"/><path d="M337 44 q-6 -10 -9 -5" fill="none" stroke="#1e0800" stroke-width="1.8" opacity="0.43"/><path d="M242 188 q-1 -9 10 -4" fill="none" stroke="#1e0800" stroke-width="1.1" opacity="0.74"/><path d="M378 111 q-1 1 -3 8" fill="none" stroke="#1e0800" stroke-width="1.0" opacity="0.44"/><path d="M363 149 q-9 -8 -19 -8" fill="none" stroke="#1e0800" stroke-width="1.0" opacity="0.59"/><path d="M323 149 q5 -7 4 -6" fill="none" stroke="#1e0800" stroke-width="1.5" opacity="0.38"/><path d="M184 170 q2 -4 15 7" fill="none" stroke="#1e0800" stroke-width="1.3" opacity="0.55"/><path d="M263 125 q-4 -7 1 -1" fill="none" stroke="#1e0800" stroke-width="1.6" opacity="0.56"/><path d="M386 67 q2 -5 -5 5" fill="none" stroke="#1e0800" stroke-width="1.3" opacity="0.37"/><path d="M298 111 q-14 2 -21 9" fill="none" stroke="#1e0800" stroke-width="1.1" opacity="0.44"/><path d="M194 147 q-10 -5 -21 2" fill="none" stroke="#1e0800" stroke-width="0.9" opacity="0.58"/><path d="M387 151 q-11 -3 -17 -0" fill="none" stroke="#1e0800" stroke-width="1.2" opacity="0.55"/><path d="M204 124 q-12 -6 -16 1" fill="none" stroke="#1e0800" stroke-width="1.7" opacity="0.65"/><path d="M267 88 q4 -5 1 -2" fill="none" stroke="#1e0800" stroke-width="1.0" opacity="0.73"/><path d="M254 91 q11 2 13 8" fill="none" stroke="#1e0800" stroke-width="1.3" opacity="0.68"/><defs><linearGradient id="lf1" x1="0" y1="0" x2="1" y2="0.3"><stop offset="0" stop-color="#120400" stop-opacity="0.75"/><stop offset="0.35" stop-color="#120400" stop-opacity="0"/></linearGradient></defs><circle cx="293.5" cy="123" r="127" fill="url(#lf1)"/><path d="M167 128 Q200 160 215 185 Q235 200 255 203 Q290 196 330 205 Q370 200 395 190 Q408 185 414 165 Q412 215 360 238 Q320 255 280 250 Q220 245 190 205 Q170 170 167 128Z" fill="#060200"/><path d="M255 203 Q270 188 290 198 Q310 190 330 205Z" fill="#4a1a04" opacity="0.8"/><path d="M190 215 Q230 255 300 251 Q360 245 400 200" fill="none" stroke="#e8d8b8" stroke-width="1.2" opacity="0.6"/><path d="M264 216 Q300 210 343 214 L340 222 H268Z" fill="#4ab4dc"/><path d="M282 213 L290 206 L296 208 L300 200 L303 208 L312 206 L322 212Z" fill="#c8eef8"/><rect x="290" y="217" width="26" height="2.5" fill="#e06070"/><path d="M296 191 H308" stroke="#6ab" stroke-width="2"/></g></svg>
<div class="t " style="left:219.3px;top:334.07px;font-size:20px;font-weight:700;color:#111;letter-spacing:0px;">Scene 21</div>
<div class="r" style="left:319.1px;top:341px;width:5px;height:5px;border-radius:50%;background:#3b3d52"></div>
<div class="t " style="left:338.5px;top:334.07px;font-size:20px;font-weight:700;color:#111;letter-spacing:0px;">Shot 1</div>
<div class="r" style="left:190px;top:682px;width:554px;height:2px;background:#ededef;"></div>
<div class="r" style="left:190px;top:731px;width:554px;height:2px;background:#ededef;"></div>
<div class="t " style="left:259px;top:650.61px;font-size:17px;font-weight:400;color:#1b1b1b;letter-spacing:0.25px;">The ship approaches the planet Arrakis</div>
<div class="t " style="left:259px;top:699.11px;font-size:17px;font-weight:400;color:#1b1b1b;letter-spacing:0.25px;">** Ship Sounds**</div>
<div class="t " style="left:259px;top:748.11px;font-size:17px;font-weight:400;color:#1b1b1b;letter-spacing:0.25px;">VFX</div>
<svg style="left:211px;top:650px" width="26" height="22" viewBox="0 0 26 22"><rect x="0.8" y="1.5" width="23.8" height="3.7" rx="1.85" fill="#575b80"/><rect x="0.8" y="9" width="23.8" height="3.8" rx="1.9" fill="#8c91b0"/><rect x="0.8" y="16.7" width="12.6" height="3.7" rx="1.85" fill="#9aa0bd"/></svg>
<svg style="left:211px;top:696px" width="24" height="24" viewBox="0 0 24 24"><circle cx="12.35" cy="12.6" r="10.15" fill="#575b80"/><path d="M9.2 7.9 L18.3 12.6 L9.2 17.3Z" fill="#fff"/></svg>
<svg style="left:212px;top:747px" width="28" height="20" viewBox="0 0 28 20"><rect x="1.2" y="1.9" width="18.8" height="15.9" rx="2.2" fill="#575b80"/><path d="M21 8 L26.7 3.5 V15.7 L21 11.5Z" fill="#b3b6d3"/></svg>
<div class="r" style="left:776px;top:300px;width:554px;height:490px;background:#fff;border-radius:20px;box-shadow:0 0 0 2px rgba(226,227,233,0.6),0 0 5px 4px rgba(226,227,233,0.4),0 3px 9px 2px rgba(40,40,70,0.035)"></div>
<svg style="left:774px;top:373px" width="554" height="249" viewBox="0 0 556 251" preserveAspectRatio="none"><defs><clipPath id="cl1"><rect width="556" height="251"/></clipPath></defs><g clip-path="url(#cl1)"><defs><linearGradient id="sk2" x1="0" y1="0" x2="0" y2="1"><stop offset="0" stop-color="#fff6ea"/><stop offset="0.3" stop-color="#ffffff"/><stop offset="0.45" stop-color="#ffb050"/><stop offset="0.58" stop-color="#ffaa30"/><stop offset="0.72" stop-color="#ffcd55"/><stop offset="1" stop-color="#fde7a8"/></linearGradient><radialGradient id="or2" cx="0.25" cy="0.2" r="0.8"><stop offset="0" stop-color="#ff7410"/><stop offset="0.6" stop-color="#ff9030"/><stop offset="1" stop-color="#ffb040"/></radialGradient></defs><rect width="556" height="251" fill="url(#sk2)"/><path d="M4 0 H80 Q110 40 170 72 Q220 95 262 103 L262 150 L0 150 V40 Q0 10 4 0Z" fill="url(#or2)"/><path d="M488 0 H556 V170 L420 170 L420 80 Q460 40 488 0Z" fill="#ff9a3a"/><path d="M500 0 H556 V120 Q520 60 500 0Z" fill="#ff8030" opacity="0.7"/><rect x="0" y="118" width="556" height="60" fill="#ffb030" opacity="0.55"/><path d="M0 160 Q30 140 60 170 Q90 150 120 180 Q170 165 200 185 Q260 170 300 190 V251 H0Z" fill="#ffe7a2" opacity="0.85"/><path d="M390 200 Q430 180 470 195 Q510 175 556 185 V251 H390Z" fill="#ffe9aa" opacity="0.8"/><path d="M0 0 H21 L5 46 L0 48Z" fill="#fff6ea"/><path d="M0 100 Q30 130 60 175 Q20 160 0 140Z" fill="#fde4a8"/><path d="M0 48 Q20 88 39 124 Q80 190 130 251 H90 Q45 190 8 124 Q2 112 0 100 Z" fill="#fffaf3"/><path d="M0 48 Q20 88 39 124 Q80 190 130 251 M0 100 Q2 112 8 124 Q45 190 90 251" stroke="#222" stroke-width="0.9" fill="none" opacity="0.8"/><path d="M0 14 Q15 20 15 30 M0 140 Q20 150 25 175 Q35 195 48 210 M75 182 Q85 175 100 180 Q130 185 140 215 Q148 240 150 251" stroke="#222" stroke-width="0.9" fill="none" opacity="0.7"/><path d="M92 0 L130 90 M100 0 L138 85 M128 0 L160 90" stroke="#222" stroke-width="1.2" fill="none"/><rect x="297" y="50" width="77" height="201" fill="#050505"/><rect x="272" y="110" width="14" height="141" fill="#0a0a0a"/><rect x="282" y="90" width="10" height="161" fill="#111"/><rect x="380" y="90" width="12" height="161" fill="#0a0a0a"/><rect x="398" y="110" width="12" height="141" fill="#111"/><path d="M177 63 Q230 55 290 62 L295 78 Q240 80 200 72Z" fill="#080808"/><path d="M205 58 Q240 30 290 55Z" fill="#0a0a0a"/><path d="M283 44 Q320 15 375 30 L395 50 L385 70 H290Z" fill="#050505"/><path d="M370 55 Q410 38 470 58 L478 66 L440 78 L380 80Z" fill="#080808"/><path d="M272 8 A72 60 0 0 1 420 50" stroke="#111" stroke-width="1.5" fill="none"/><path d="M198 58 A55 40 0 0 1 282 60" stroke="#111" stroke-width="1.2" fill="none"/><path d="M375 55 A50 40 0 0 1 465 75" stroke="#111" stroke-width="1.2" fill="none"/><path d="M230 85 L265 130 L275 128 L245 82Z" fill="#0a0a0a"/><path d="M430 90 L395 140 L405 142 L440 92Z" fill="#0a0a0a"/><path d="M86 158 L110 140 L118 125 L175 105 L205 128 L208 140 L190 150 L120 172 Z" fill="#36b4e6"/><path d="M105 135 L170 112 L180 128 L115 150Z" fill="#c6ecf8"/><path d="M140 130 L200 115" stroke="#222" stroke-width="1"/><path d="M60 154 L135 155" stroke="#2a1a08" stroke-width="1" fill="none" opacity="0.6"/><path d="M300 155 L556 156" stroke="#2a1a08" stroke-width="1" fill="none" opacity="0.6"/><path d="M330 175 L556 176" stroke="#2a1a08" stroke-width="1" fill="none" opacity="0.6"/><path d="M170 172 L270 173" stroke="#2a1a08" stroke-width="1" fill="none" opacity="0.6"/><path d="M440 230 L556 231" stroke="#2a1a08" stroke-width="1" fill="none" opacity="0.6"/><path d="M210 227 L300 228" stroke="#2a1a08" stroke-width="1" fill="none" opacity="0.6"/></g></svg>
<div class="t " style="left:805.3px;top:334.07px;font-size:20px;font-weight:700;color:#111;letter-spacing:0px;">Scene 21</div>
<div class="r" style="left:905.1px;top:341px;width:5px;height:5px;border-radius:50%;background:#3b3d52"></div>
<div class="t " style="left:924.5px;top:334.07px;font-size:20px;font-weight:700;color:#111;letter-spacing:0px;">Shot 2</div>
<div class="r" style="left:776px;top:682px;width:554px;height:2px;background:#ededef;"></div>
<div class="r" style="left:776px;top:731px;width:554px;height:2px;background:#ededef;"></div>
<div class="t " style="left:845px;top:650.61px;font-size:17px;font-weight:400;color:#1b1b1b;letter-spacing:0.25px;">The pod of ships land in the Capitol</div>
<div class="t " style="left:845px;top:699.11px;font-size:17px;font-weight:400;color:#1b1b1b;letter-spacing:0.25px;">** Whirring Sounds **</div>
<div class="t " style="left:845px;top:748.11px;font-size:17px;font-weight:400;color:#1b1b1b;letter-spacing:0.25px;">Natural Light</div>
<svg style="left:797px;top:650px" width="26" height="22" viewBox="0 0 26 22"><rect x="0.8" y="1.5" width="23.8" height="3.7" rx="1.85" fill="#575b80"/><rect x="0.8" y="9" width="23.8" height="3.8" rx="1.9" fill="#8c91b0"/><rect x="0.8" y="16.7" width="12.6" height="3.7" rx="1.85" fill="#9aa0bd"/></svg>
<svg style="left:797px;top:696px" width="24" height="24" viewBox="0 0 24 24"><circle cx="12.35" cy="12.6" r="10.15" fill="#575b80"/><path d="M9.2 7.9 L18.3 12.6 L9.2 17.3Z" fill="#fff"/></svg>
<svg style="left:798px;top:747px" width="28" height="20" viewBox="0 0 28 20"><rect x="1.2" y="1.9" width="18.8" height="15.9" rx="2.2" fill="#575b80"/><path d="M21 8 L26.7 3.5 V15.7 L21 11.5Z" fill="#b3b6d3"/></svg>
<div class="r" style="left:1362px;top:300px;width:554px;height:490px;background:#fff;border-radius:20px;box-shadow:0 0 0 2px rgba(226,227,233,0.6),0 0 5px 4px rgba(226,227,233,0.4),0 3px 9px 2px rgba(40,40,70,0.035)"></div>
<svg style="left:1360px;top:373px" width="554" height="249" viewBox="0 0 556 251" preserveAspectRatio="none"><defs><clipPath id="cl2"><rect width="556" height="251"/></clipPath></defs><g clip-path="url(#cl2)"><defs><linearGradient id="bg3" x1="0" y1="0" x2="1" y2="0"><stop offset="0" stop-color="#e2643a"/><stop offset="0.78" stop-color="#e6643a"/><stop offset="0.86" stop-color="#e8a048"/><stop offset="1" stop-color="#e2b450"/></linearGradient></defs><rect width="556" height="251" fill="url(#bg3)"/><path d="M0 78 Q20 76 30 70 V0 M38 0 V135 M44 0 V135 M0 93 H38 M46 75 H122 M122 0 V130 M0 110 H36" stroke="#2a1208" stroke-width="1.2" fill="none"/><rect x="56" y="88" width="18" height="10" fill="none" stroke="#2a1208" stroke-width="1.2"/><rect x="95" y="31" width="18" height="30" fill="#2a1208" opacity="0.55"/><path d="M52 105 h6 v12 h-6Z M60 105 h6 v12 h-6Z M105 105 h6 v12 h-6Z M112 105 h6 v12 h-6Z M16 110 h14 v16 h-14Z" fill="none" stroke="#2a1208" stroke-width="1.1"/><path d="M254 0 L283 100 M318 0 L350 110 M372 0 L390 75 M490 0 L510 180 M520 0 L540 160 M549 0 L554 150" stroke="#2a1208" stroke-width="1.2" fill="none"/><ellipse cx="293" cy="28" rx="17" ry="26" fill="none" stroke="#2a1208" stroke-width="1.2"/><path d="M338 50 Q350 45 365 48 L372 72 Q360 82 345 80Z" fill="none" stroke="#2a1208" stroke-width="2"/><path d="M276 66 h8 v8 h-8Z M288 66 h8 v8 h-8Z M300 66 h8 v8 h-8Z M312 66 h8 v8 h-8Z" fill="#2a1208" opacity="0.8"/><path d="M508 30 L530 50 M515 70 h22 v30 h-15 M515 110 h25 v35 h-25Z" stroke="#2a1208" stroke-width="1.6" fill="none"/><path d="M0 130 Q60 122 140 128 L140 150 Q70 145 0 160Z" fill="#e46c44"/><path d="M0 130 Q60 122 140 128 M0 160 Q70 145 140 150" stroke="#2a1208" stroke-width="1.2" fill="none"/><path d="M0 172 Q40 162 100 168 L100 251 H0Z" fill="#0a0504"/><path d="M58 190 Q62 182 95 185 L92 251 H68 Q70 220 58 190Z" fill="#e46a40"/><path d="M62 196 Q75 192 92 195 L90 251 H72Z" fill="#100806"/><path d="M80 104 Q80 90 91 89 Q102 90 102 104 Q102 114 98 120 Q115 125 118 140 L112 200 Q100 205 80 200 L66 175 Q58 150 60 135 Q68 122 84 120 Q80 114 80 104Z" fill="#0e0705"/><path d="M96 125 Q110 130 112 150 L106 160 Q100 140 92 128Z" fill="#d86038" opacity="0.8"/><path d="M285 104 Q286 86 302 84 Q318 86 319 104 Q318 118 312 122 L276 130 V115Z" fill="#e06a40"/><path d="M302 84 Q318 86 319 104 Q316 112 310 118 Q312 100 300 92Z" fill="#1a0c06"/><path d="M276 115 Q295 112 313 120 L318 150 L290 160 L276 150Z" fill="#3a1a0a"/><path d="M341 110 Q342 90 360 89 Q378 92 378 112 Q376 130 362 134 Q350 132 341 120Z" fill="#e67044"/><path d="M345 92 Q360 86 372 94 Q362 100 355 112 Q348 118 343 110Z" fill="#1a0c06"/><path d="M306 140 Q330 128 358 132 Q372 140 368 160 L360 230 L340 240 Q325 225 312 200 Q302 170 306 140Z" fill="#0e0705"/><path d="M97 251 Q96 210 102 177 Q115 150 145 134 Q170 160 190 172 Q215 160 220 121 Q245 125 276 130 Q292 145 300 165 Q318 200 347 251Z" fill="#10c0f2"/><path d="M147 121 Q160 150 182 174 Q205 172 218 121 L205 112 Q185 140 165 125Z" fill="#0a0605"/><path d="M100 200 Q110 175 130 160 M230 150 Q235 190 228 230 M260 170 Q265 200 262 240" stroke="#0a4a60" stroke-width="1" fill="none" opacity="0.6"/><path d="M140 62 Q150 50 180 50 Q208 52 212 68 Q215 100 204 128 Q190 146 170 145 Q152 140 146 120 Q140 95 140 62Z" fill="#e9a27c"/><path d="M160 84 Q170 80 178 84 M188 82 Q196 78 204 82 M172 118 Q182 114 192 118" stroke="#1a0a04" stroke-width="1.6" fill="none"/><path d="M121 80 Q118 30 150 18 Q185 8 212 22 Q226 40 223 100 L214 105 Q214 70 205 56 Q175 48 148 58 Q140 70 142 110 L138 120 Q125 110 121 80Z" fill="#caa444"/><path d="M132 40 Q150 22 180 20 Q175 35 160 38 Q150 50 135 55Z" fill="#1a1006" opacity="0.85"/><circle cx="138" cy="98" r="16" fill="#b08c38"/><circle cx="139" cy="99" r="8" fill="#2a1c08"/><circle cx="139" cy="99" r="3.5" fill="#caa444"/><path d="M360 249 Q370 200 380 160 Q392 120 420 98 L470 110 Q487 130 487 170 Q482 210 476 249Z" fill="#0e0705"/><path d="M408 120 Q440 108 472 120 Q480 160 478 205 Q445 212 410 200 Q404 160 408 120Z" fill="#e46838"/><path d="M462 112 Q490 125 500 160 Q508 190 518 218 L532 232 L520 236 L506 222 Q490 190 478 165Z" fill="#dcae48"/><path d="M397 110 Q400 60 425 40 Q450 28 475 38 Q498 55 498 95 Q497 120 486 124 Q480 100 472 82 Q455 64 432 72 Q420 88 418 110 Q408 118 397 110Z" fill="#e2b850"/><path d="M430 62 Q450 52 470 62 Q482 80 476 96 Q466 106 450 104 Q436 98 432 82Z" fill="#ecb090"/><path d="M432 60 Q445 38 470 40 Q485 48 482 66 Q465 50 440 62Z" fill="#c89838"/><path d="M444 92 Q450 96 456 92" stroke="#1a0a04" stroke-width="2.2" fill="none"/><path d="M490 170 L556 180 V251 H500Z" fill="#e0b048"/><path d="M495 180 L556 188 M500 200 h40 M505 215 h30" stroke="#2a1208" stroke-width="1.5" fill="none"/></g></svg>
<div class="t " style="left:1391.3px;top:334.07px;font-size:20px;font-weight:700;color:#111;letter-spacing:0px;">Scene 21</div>
<div class="r" style="left:1491.1px;top:341px;width:5px;height:5px;border-radius:50%;background:#3b3d52"></div>
<div class="t " style="left:1510.5px;top:334.07px;font-size:20px;font-weight:700;color:#111;letter-spacing:0px;">Shot 3</div>
<div class="r" style="left:1362px;top:682px;width:554px;height:2px;background:#ededef;"></div>
<div class="r" style="left:1362px;top:731px;width:554px;height:2px;background:#ededef;"></div>
<div class="t " style="left:1431px;top:650.61px;font-size:17px;font-weight:400;color:#1b1b1b;letter-spacing:0.25px;">The Captain prepares for landing</div>
<div class="t " style="left:1431px;top:699.11px;font-size:17px;font-weight:400;color:#1b1b1b;letter-spacing:0.25px;">“We are approaching Arrakis”</div>
<div class="t " style="left:1431px;top:748.11px;font-size:17px;font-weight:400;color:#1b1b1b;letter-spacing:0.25px;">Practical Lighting</div>
<svg style="left:1383px;top:650px" width="26" height="22" viewBox="0 0 26 22"><rect x="0.8" y="1.5" width="23.8" height="3.7" rx="1.85" fill="#575b80"/><rect x="0.8" y="9" width="23.8" height="3.8" rx="1.9" fill="#8c91b0"/><rect x="0.8" y="16.7" width="12.6" height="3.7" rx="1.85" fill="#9aa0bd"/></svg>
<svg style="left:1383px;top:696px" width="24" height="24" viewBox="0 0 24 24"><circle cx="12.35" cy="12.6" r="10.15" fill="#575b80"/><path d="M9.2 7.9 L18.3 12.6 L9.2 17.3Z" fill="#fff"/></svg>
<svg style="left:1384px;top:747px" width="28" height="20" viewBox="0 0 28 20"><rect x="1.2" y="1.9" width="18.8" height="15.9" rx="2.2" fill="#575b80"/><path d="M21 8 L26.7 3.5 V15.7 L21 11.5Z" fill="#b3b6d3"/></svg>
<div class="r" style="left:190px;top:820px;width:554px;height:490px;background:#fff;border-radius:20px;box-shadow:0 0 0 2px rgba(226,227,233,0.6),0 0 5px 4px rgba(226,227,233,0.4),0 3px 9px 2px rgba(40,40,70,0.035)"></div>
<svg style="left:188px;top:893px" width="556" height="250" viewBox="0 0 556 251" preserveAspectRatio="none"><defs><clipPath id="cl3"><rect width="556" height="251"/></clipPath></defs><g clip-path="url(#cl3)"><defs><linearGradient id="ds4" x1="0" y1="0" x2="0" y2="1"><stop offset="0" stop-color="#f4d494"/><stop offset="0.2" stop-color="#f2c070"/><stop offset="0.45" stop-color="#e88a40"/><stop offset="1" stop-color="#b84c1c"/></linearGradient><linearGradient id="rp4" x1="0" y1="0" x2="1" y2="0.2"><stop offset="0" stop-color="#ecd6a0"/><stop offset="0.3" stop-color="#d09060"/><stop offset="0.65" stop-color="#6a4a48"/><stop offset="1" stop-color="#2a3040"/></linearGradient></defs><rect width="556" height="251" fill="#030303"/><path d="M53 2 H506 L485 188 H90Z" fill="#124a64"/><path d="M53 2 H506 L498 22 Q400 30 330 26 Q260 18 150 24 Q90 20 57 30Z" fill="#050505"/><path d="M60 40 Q120 25 162 88 H72Z" fill="#6f8ea6" opacity="0.85"/><path d="M58 42 Q85 34 110 40 Q80 45 62 60Z" fill="#d8d0b0" opacity="0.5"/><path d="M321 86 Q345 30 400 8 Q430 0 470 2 L490 20 L488 95Z" fill="url(#rp4)"/><circle cx="144" cy="9" r="13" fill="#6a3418"/><circle cx="144" cy="9" r="13" fill="none" stroke="#c07040" stroke-width="1.5"/><circle cx="251" cy="21" r="7" fill="#b86a40"/><circle cx="286" cy="26" r="2.8" fill="#c87040"/><path d="M66 95 Q160 82 290 84 Q400 86 490 95 L485 188 H88Z" fill="url(#ds4)"/><defs><clipPath id="dsc4"><path d="M66 95 Q160 82 290 84 Q400 86 490 95 L485 188 H88Z"/></clipPath></defs><g clip-path="url(#dsc4)"><path d="M234 155 L261 139 L280 155Z" fill="#2a0e04" opacity="0.73"/><path d="M301 125 L315 118 L325 125Z" fill="#2a0e04" opacity="0.83"/><path d="M108 134 L118 130 L124 134Z" fill="#2a0e04" opacity="0.79"/><path d="M54 189 L97 167 L127 189Z" fill="#2a0e04" opacity="0.77"/><path d="M136 111 L143 105 L148 111Z" fill="#2a0e04" opacity="0.62"/><path d="M167 112 L177 107 L183 112Z" fill="#2a0e04" opacity="0.84"/><path d="M265 161 L288 150 L303 161Z" fill="#2a0e04" opacity="0.71"/><path d="M142 190 L191 168 L226 190Z" fill="#2a0e04" opacity="0.80"/><path d="M199 128 L206 123 L211 128Z" fill="#2a0e04" opacity="0.82"/><path d="M213 178 L240 166 L259 178Z" fill="#2a0e04" opacity="0.85"/><path d="M62 127 L80 116 L93 127Z" fill="#2a0e04" opacity="0.89"/><path d="M224 116 L239 109 L249 116Z" fill="#2a0e04" opacity="0.64"/><path d="M88 137 L115 124 L134 137Z" fill="#2a0e04" opacity="0.59"/><path d="M172 118 L179 115 L183 118Z" fill="#2a0e04" opacity="0.61"/><path d="M291 146 L304 140 L313 146Z" fill="#2a0e04" opacity="0.60"/><path d="M329 119 L337 113 L343 119Z" fill="#2a0e04" opacity="0.64"/><path d="M446 174 L468 164 L484 174Z" fill="#2a0e04" opacity="0.62"/><path d="M218 178 L238 163 L252 178Z" fill="#2a0e04" opacity="0.90"/><path d="M149 131 L165 121 L177 131Z" fill="#2a0e04" opacity="0.65"/><path d="M99 117 L109 110 L116 117Z" fill="#2a0e04" opacity="0.76"/><path d="M203 146 L229 132 L247 146Z" fill="#2a0e04" opacity="0.75"/><path d="M417 125 L427 120 L434 125Z" fill="#2a0e04" opacity="0.84"/><path d="M159 125 L180 116 L194 125Z" fill="#2a0e04" opacity="0.62"/><path d="M435 181 L460 166 L478 181Z" fill="#2a0e04" opacity="0.59"/><path d="M75 187 L95 177 L110 187Z" fill="#2a0e04" opacity="0.64"/><path d="M398 158 L409 149 L418 158Z" fill="#2a0e04" opacity="0.80"/><path d="M90 128 L108 120 L120 128Z" fill="#2a0e04" opacity="0.77"/><path d="M181 183 L192 174 L200 183Z" fill="#2a0e04" opacity="0.64"/><path d="M252 115 L258 111 L263 115Z" fill="#2a0e04" opacity="0.75"/><path d="M103 139 L133 127 L153 139Z" fill="#2a0e04" opacity="0.78"/><path d="M349 157 L356 150 L362 157Z" fill="#2a0e04" opacity="0.56"/><path d="M422 166 L444 148 L459 166Z" fill="#2a0e04" opacity="0.77"/><path d="M250 168 L273 159 L289 168Z" fill="#2a0e04" opacity="0.58"/><path d="M262 169 L298 152 L324 169Z" fill="#2a0e04" opacity="0.80"/><path d="M374 183 L397 172 L413 183Z" fill="#2a0e04" opacity="0.87"/><path d="M401 143 L428 131 L447 143Z" fill="#2a0e04" opacity="0.75"/><path d="M311 141 L330 131 L343 141Z" fill="#2a0e04" opacity="0.58"/><path d="M293 189 L336 169 L365 189Z" fill="#2a0e04" opacity="0.69"/><path d="M352 156 L374 147 L389 156Z" fill="#2a0e04" opacity="0.58"/><path d="M369 112 L380 106 L388 112Z" fill="#2a0e04" opacity="0.63"/><path d="M334 150 L359 139 L377 150Z" fill="#2a0e04" opacity="0.64"/><path d="M71 134 L85 124 L94 134Z" fill="#2a0e04" opacity="0.61"/><path d="M418 163 L442 152 L459 163Z" fill="#2a0e04" opacity="0.66"/><path d="M332 126 L346 119 L356 126Z" fill="#2a0e04" opacity="0.87"/><path d="M417 141 L432 131 L443 141Z" fill="#2a0e04" opacity="0.60"/><path d="M242 177 L279 159 L304 177Z" fill="#2a0e04" opacity="0.88"/><path d="M181 124 L191 117 L198 124Z" fill="#2a0e04" opacity="0.62"/><path d="M228 160 L246 149 L258 160Z" fill="#2a0e04" opacity="0.84"/><path d="M467 146 L473 141 L477 146Z" fill="#2a0e04" opacity="0.86"/><path d="M77 167 L97 154 L111 167Z" fill="#2a0e04" opacity="0.83"/><path d="M80 121 L88 115 L93 121Z" fill="#2a0e04" opacity="0.84"/><path d="M168 121 L175 118 L179 121Z" fill="#2a0e04" opacity="0.71"/><path d="M296 162 L332 147 L357 162Z" fill="#2a0e04" opacity="0.79"/><path d="M152 148 L160 142 L165 148Z" fill="#2a0e04" opacity="0.72"/><path d="M357 124 L366 119 L372 124Z" fill="#2a0e04" opacity="0.79"/><path d="M265 159 L288 145 L305 159Z" fill="#2a0e04" opacity="0.83"/><path d="M424 117 L442 108 L456 117Z" fill="#2a0e04" opacity="0.60"/><path d="M235 160 L261 144 L280 160Z" fill="#2a0e04" opacity="0.75"/><path d="M399 174 L432 155 L455 174Z" fill="#2a0e04" opacity="0.78"/><path d="M130 168 L162 152 L184 168Z" fill="#2a0e04" opacity="0.80"/><path d="M114 187 L165 165 L201 187Z" fill="#2a0e04" opacity="0.74"/><path d="M362 157 L396 141 L420 157Z" fill="#2a0e04" opacity="0.67"/><path d="M88 163 L113 151 L131 163Z" fill="#2a0e04" opacity="0.72"/><path d="M76 182 L91 175 L102 182Z" fill="#2a0e04" opacity="0.61"/><path d="M203 181 L214 173 L222 181Z" fill="#2a0e04" opacity="0.73"/><path d="M331 184 L369 167 L397 184Z" fill="#2a0e04" opacity="0.72"/><path d="M448 144 L460 138 L468 144Z" fill="#2a0e04" opacity="0.65"/><path d="M343 173 L372 160 L391 173Z" fill="#2a0e04" opacity="0.75"/><path d="M170 160 L205 145 L229 160Z" fill="#2a0e04" opacity="0.62"/><path d="M392 190 L420 176 L440 190Z" fill="#2a0e04" opacity="0.62"/><path d="M278 166 L294 153 L306 166Z" fill="#2a0e04" opacity="0.89"/><path d="M259 161 L286 146 L306 161Z" fill="#2a0e04" opacity="0.72"/><path d="M340 143 L356 134 L368 143Z" fill="#2a0e04" opacity="0.88"/><path d="M436 154 L449 144 L459 154Z" fill="#2a0e04" opacity="0.70"/><path d="M385 187 L406 173 L421 187Z" fill="#2a0e04" opacity="0.62"/><path d="M309 188 L327 180 L340 188Z" fill="#2a0e04" opacity="0.56"/><path d="M138 152 L158 140 L171 152Z" fill="#2a0e04" opacity="0.67"/><path d="M312 145 L328 134 L339 145Z" fill="#2a0e04" opacity="0.73"/><path d="M163 150 L180 140 L193 150Z" fill="#2a0e04" opacity="0.68"/><path d="M235 168 L245 160 L253 168Z" fill="#2a0e04" opacity="0.77"/><path d="M303 168 L335 151 L358 168Z" fill="#2a0e04" opacity="0.85"/><path d="M133 179 L173 161 L201 179Z" fill="#2a0e04" opacity="0.66"/><path d="M183 188 L206 178 L222 188Z" fill="#2a0e04" opacity="0.86"/><path d="M114 152 L134 140 L147 152Z" fill="#2a0e04" opacity="0.58"/><path d="M393 162 L413 147 L427 162Z" fill="#2a0e04" opacity="0.69"/><path d="M342 141 L354 135 L362 141Z" fill="#2a0e04" opacity="0.87"/><path d="M447 146 L467 136 L481 146Z" fill="#2a0e04" opacity="0.73"/><path d="M347 150 L354 145 L359 150Z" fill="#2a0e04" opacity="0.56"/><path d="M283 167 L301 154 L313 167Z" fill="#2a0e04" opacity="0.61"/><path d="M113 184 L162 163 L196 184Z" fill="#2a0e04" opacity="0.58"/><path d="M76 189 L105 176 L125 189Z" fill="#2a0e04" opacity="0.66"/><path d="M246 167 L267 156 L281 167Z" fill="#2a0e04" opacity="0.55"/><path d="M345 184 L360 175 L371 184Z" fill="#2a0e04" opacity="0.81"/><path d="M231 150 L242 144 L250 150Z" fill="#2a0e04" opacity="0.56"/><path d="M400 182 L437 165 L463 182Z" fill="#2a0e04" opacity="0.77"/><path d="M212 171 L242 159 L262 171Z" fill="#2a0e04" opacity="0.83"/><path d="M145 187 L183 169 L210 187Z" fill="#2a0e04" opacity="0.84"/><path d="M202 187 L242 167 L271 187Z" fill="#2a0e04" opacity="0.82"/><path d="M368 161 L386 147 L399 161Z" fill="#2a0e04" opacity="0.67"/><path d="M253 141 L268 133 L278 141Z" fill="#2a0e04" opacity="0.77"/><path d="M146 189 L173 172 L192 189Z" fill="#2a0e04" opacity="0.78"/><path d="M283 168 L308 157 L325 168Z" fill="#2a0e04" opacity="0.77"/><path d="M336 180 L361 159 L378 180Z" fill="#2a0e04" opacity="0.77"/><path d="M364 153 L376 144 L384 153Z" fill="#2a0e04" opacity="0.62"/><path d="M215 145 L230 138 L241 145Z" fill="#2a0e04" opacity="0.74"/><path d="M246 190 L283 175 L309 190Z" fill="#2a0e04" opacity="0.77"/><path d="M382 144 L404 134 L419 144Z" fill="#2a0e04" opacity="0.57"/><path d="M439 148 L452 139 L461 148Z" fill="#2a0e04" opacity="0.72"/><path d="M301 143 L324 129 L341 143Z" fill="#2a0e04" opacity="0.73"/><path d="M303 159 L319 151 L331 159Z" fill="#2a0e04" opacity="0.75"/><path d="M85 145 Q280 135 485 145 L485 188 H90Z" fill="#4a1806" opacity="0.45"/></g><path d="M86 190 Q120 178 150 160 Q280 148 412 160 Q440 176 474 190 Q440 215 418 251 H138 Q118 215 86 190Z" fill="#9a4a1e"/><path d="M150 160 Q280 148 412 160 L415 251 H140Z" fill="#a85424"/><path d="M160 172 H232 V245 H160Z" fill="#3a1608" opacity="0.6"/><rect x="166" y="182" width="38" height="37" fill="#050202"/><rect x="209" y="182" width="22" height="37" fill="#050202"/><rect x="322" y="170" width="82" height="78" fill="#3a1608" opacity="0.55"/><rect x="237" y="170" width="78" height="52" fill="#2a1006"/><rect x="241" y="174" width="70" height="21" fill="#56c4ee"/><rect x="241" y="195" width="70" height="24" fill="#d8682c"/><path d="M140 160 V251 M412 160 V251 M232 172 V251 M318 172 V251" stroke="#1a0802" stroke-width="2"/><path d="M30 232 L80 202 L106 210 L118 251 H48Z" fill="#cc6430"/><path d="M60 225 L100 215 L108 251 H70Z" fill="#1a0a04" opacity="0.6"/><path d="M446 212 L478 202 L526 236 L518 251 H442Z" fill="#cc6430"/><path d="M450 225 L490 220 L500 251 H455Z" fill="#1a0a04" opacity="0.5"/><path d="M49 2 L85 188 Q40 215 0 236" stroke="#dc6430" stroke-width="2.5" fill="none"/><path d="M507 2 L480 188 Q520 210 556 238" stroke="#dc6430" stroke-width="2.5" fill="none"/><path d="M88 188 Q280 145 480 188" stroke="#e0a060" stroke-width="2" fill="none" opacity="0.7"/></g></svg>
<div class="t " style="left:219.3px;top:854.07px;font-size:20px;font-weight:700;color:#111;letter-spacing:0px;">Scene 21</div>
<div class="r" style="left:319.1px;top:861px;width:5px;height:5px;border-radius:50%;background:#3b3d52"></div>
<div class="t " style="left:338.5px;top:854.07px;font-size:20px;font-weight:700;color:#111;letter-spacing:0px;">Shot 4</div>
<div class="r" style="left:190px;top:1202px;width:554px;height:2px;background:#ededef;"></div>
<div class="r" style="left:190px;top:1251px;width:554px;height:2px;background:#ededef;"></div>
<div class="t " style="left:259px;top:1170.61px;font-size:17px;font-weight:400;color:#1b1b1b;letter-spacing:0.25px;">POV from Captain</div>
<div class="t " style="left:259px;top:1219.11px;font-size:17px;font-weight:400;color:#1b1b1b;letter-spacing:0.25px;">Landing gear drops</div>
<div class="t " style="left:259px;top:1268.11px;font-size:17px;font-weight:400;color:#1b1b1b;letter-spacing:0.25px;">Practical, VFX</div>
<svg style="left:211px;top:1170px" width="26" height="22" viewBox="0 0 26 22"><rect x="0.8" y="1.5" width="23.8" height="3.7" rx="1.85" fill="#575b80"/><rect x="0.8" y="9" width="23.8" height="3.8" rx="1.9" fill="#8c91b0"/><rect x="0.8" y="16.7" width="12.6" height="3.7" rx="1.85" fill="#9aa0bd"/></svg>
<svg style="left:211px;top:1216px" width="24" height="24" viewBox="0 0 24 24"><circle cx="12.35" cy="12.6" r="10.15" fill="#575b80"/><path d="M9.2 7.9 L18.3 12.6 L9.2 17.3Z" fill="#fff"/></svg>
<svg style="left:212px;top:1267px" width="28" height="20" viewBox="0 0 28 20"><rect x="1.2" y="1.9" width="18.8" height="15.9" rx="2.2" fill="#575b80"/><path d="M21 8 L26.7 3.5 V15.7 L21 11.5Z" fill="#b3b6d3"/></svg>
<div class="r" style="left:776px;top:820px;width:554px;height:490px;background:#fff;border-radius:20px;box-shadow:0 0 0 2px rgba(226,227,233,0.6),0 0 5px 4px rgba(226,227,233,0.4),0 3px 9px 2px rgba(40,40,70,0.035)"></div>
<svg style="left:774px;top:893px" width="554" height="248" viewBox="0 0 556 251" preserveAspectRatio="none"><defs><clipPath id="cl4"><rect width="556" height="251"/></clipPath></defs><g clip-path="url(#cl4)"><rect width="556" height="251" fill="#c6f0fa"/><path d="M0 0 H140 Q100 20 30 50 H0Z" fill="#030303"/><path d="M0 210 Q60 220 110 240 L100 251 H0Z" fill="#030303"/><path d="M0 115 Q60 105 120 110 L110 190 L80 251 H0Z" fill="#1aa2e6"/><path d="M0 150 Q40 160 60 200 L60 251 H0Z" fill="#0e8ed8" opacity="0.6"/><path d="M130 115 L200 100 H320 L355 60 L395 100 H470 L520 115 L556 140 V251 H110Z" fill="#16a0e2"/><path d="M170 0 H200 V120 H170Z" fill="#1aa2e6"/><path d="M330 0 H360 V80 H330Z" fill="#1aa2e6"/><path d="M205 45 Q260 40 300 60 L290 90 Q240 85 210 80Z" fill="#1aa8e8" opacity="0.8"/><path d="M370 55 Q430 50 500 70 L495 85 Q430 80 375 70Z" fill="#1aa8e8" opacity="0.8"/><rect x="239" y="115" width="243" height="70" rx="35" fill="#f07a8a"/><path d="M255 125 Q360 110 470 125 Q475 140 470 155 Q360 150 250 160Z" fill="#9686c8"/><path d="M330 140 L355 135 L360 165 L335 170Z M365 140 L385 140 L390 160 L370 165Z" fill="#151015"/><rect x="239" y="115" width="243" height="70" rx="35" fill="none" stroke="#111" stroke-width="1.5"/><circle cx="179" cy="177" r="24" fill="#f08090"/><path d="M155 175 Q160 150 185 152 Q200 160 200 170Z" fill="#9686c8"/><circle cx="179" cy="177" r="30" fill="none" stroke="#111" stroke-width="1.3"/><circle cx="548" cy="180" r="22" fill="#f08090"/><path d="M530 175 Q535 160 556 160 V176Z" fill="#9686c8"/><path d="M120 0 V251 M200 0 V251 M480 100 L556 100 M0 60 H120 M0 90 H120" stroke="#111" stroke-width="1" fill="none" opacity="0.6"/><path d="M200 210 H480 M200 225 H480" stroke="#111" stroke-width="1.2" fill="none" opacity="0.7"/><path d="M346 186 L353 219" stroke="#0a1a22" stroke-width="1.5" opacity="0.7"/><path d="M16 117 L51 132" stroke="#0a1a22" stroke-width="0.9" opacity="0.7"/><path d="M261 62 L283 50" stroke="#0a1a22" stroke-width="1.0" opacity="0.7"/><path d="M155 230 L186 240" stroke="#0a1a22" stroke-width="0.9" opacity="0.7"/><path d="M343 32 L347 39" stroke="#0a1a22" stroke-width="1.0" opacity="0.7"/><path d="M546 219 L551 235" stroke="#0a1a22" stroke-width="1.3" opacity="0.7"/><path d="M114 236 L118 266" stroke="#0a1a22" stroke-width="1.0" opacity="0.7"/><path d="M201 42 L213 39" stroke="#0a1a22" stroke-width="1.3" opacity="0.7"/><path d="M2 170 L20 176" stroke="#0a1a22" stroke-width="1.2" opacity="0.7"/><path d="M176 121 L203 135" stroke="#0a1a22" stroke-width="0.8" opacity="0.7"/><path d="M417 212 L420 220" stroke="#0a1a22" stroke-width="1.3" opacity="0.7"/><path d="M101 240 L102 254" stroke="#0a1a22" stroke-width="1.6" opacity="0.7"/><path d="M191 89 L204 111" stroke="#0a1a22" stroke-width="1.4" opacity="0.7"/><path d="M443 216 L448 224" stroke="#0a1a22" stroke-width="1.1" opacity="0.7"/><path d="M340 230 L345 248" stroke="#0a1a22" stroke-width="1.0" opacity="0.7"/><path d="M176 45 L186 47" stroke="#0a1a22" stroke-width="1.6" opacity="0.7"/><path d="M549 134 L570 136" stroke="#0a1a22" stroke-width="1.5" opacity="0.7"/><path d="M253 106 L258 114" stroke="#0a1a22" stroke-width="1.2" opacity="0.7"/><path d="M466 33 L474 63" stroke="#0a1a22" stroke-width="1.4" opacity="0.7"/><path d="M59 109 L65 121" stroke="#0a1a22" stroke-width="1.2" opacity="0.7"/><path d="M556 214 L595 213" stroke="#0a1a22" stroke-width="1.4" opacity="0.7"/><path d="M266 73 L287 70" stroke="#0a1a22" stroke-width="1.6" opacity="0.7"/><path d="M534 157 L556 148" stroke="#0a1a22" stroke-width="1.0" opacity="0.7"/><path d="M435 218 L438 237" stroke="#0a1a22" stroke-width="1.4" opacity="0.7"/><path d="M369 191 L377 209" stroke="#0a1a22" stroke-width="1.2" opacity="0.7"/><path d="M428 173 L432 190" stroke="#0a1a22" stroke-width="1.3" opacity="0.7"/><path d="M6 137 L22 137" stroke="#0a1a22" stroke-width="1.5" opacity="0.7"/><path d="M360 200 L379 205" stroke="#0a1a22" stroke-width="1.5" opacity="0.7"/><path d="M195 212 L226 228" stroke="#0a1a22" stroke-width="1.6" opacity="0.7"/><path d="M288 133 L289 146" stroke="#0a1a22" stroke-width="1.2" opacity="0.7"/><path d="M384 181 L415 189" stroke="#0a1a22" stroke-width="1.3" opacity="0.7"/><path d="M370 106 L377 133" stroke="#0a1a22" stroke-width="1.4" opacity="0.7"/><path d="M245 163 L260 165" stroke="#0a1a22" stroke-width="0.8" opacity="0.7"/><path d="M262 57 L272 55" stroke="#0a1a22" stroke-width="0.9" opacity="0.7"/><path d="M259 95 L285 88" stroke="#0a1a22" stroke-width="1.5" opacity="0.7"/><path d="M0 102 L16 95" stroke="#0a1a22" stroke-width="1.5" opacity="0.7"/><path d="M208 9 L235 10" stroke="#0a1a22" stroke-width="1.1" opacity="0.7"/><path d="M323 241 L356 251" stroke="#0a1a22" stroke-width="1.3" opacity="0.7"/><path d="M205 36 L230 48" stroke="#0a1a22" stroke-width="1.6" opacity="0.7"/><path d="M338 88 L372 74" stroke="#0a1a22" stroke-width="1.3" opacity="0.7"/><path d="M342 35 L353 61" stroke="#0a1a22" stroke-width="1.1" opacity="0.7"/><path d="M126 73 L161 91" stroke="#0a1a22" stroke-width="1.5" opacity="0.7"/><path d="M331 65 L371 62" stroke="#0a1a22" stroke-width="1.1" opacity="0.7"/><path d="M547 123 L563 117" stroke="#0a1a22" stroke-width="1.3" opacity="0.7"/><path d="M247 74 L264 101" stroke="#0a1a22" stroke-width="1.2" opacity="0.7"/><path d="M152 235 L184 227" stroke="#0a1a22" stroke-width="0.9" opacity="0.7"/><path d="M550 74 L577 78" stroke="#0a1a22" stroke-width="1.3" opacity="0.7"/><path d="M413 30 L446 31" stroke="#0a1a22" stroke-width="1.1" opacity="0.7"/><path d="M165 133 L187 139" stroke="#0a1a22" stroke-width="1.3" opacity="0.7"/><path d="M20 63 L23 86" stroke="#0a1a22" stroke-width="1.2" opacity="0.7"/><path d="M8 195 L29 200" stroke="#0a1a22" stroke-width="1.3" opacity="0.7"/><path d="M268 229 L287 236" stroke="#0a1a22" stroke-width="1.0" opacity="0.7"/><path d="M165 208 L167 218" stroke="#0a1a22" stroke-width="1.1" opacity="0.7"/><path d="M159 196 L196 195" stroke="#0a1a22" stroke-width="1.2" opacity="0.7"/><path d="M277 83 L289 87" stroke="#0a1a22" stroke-width="0.9" opacity="0.7"/><path d="M128 206 L158 190" stroke="#0a1a22" stroke-width="1.4" opacity="0.7"/><path d="M544 251 L573 261" stroke="#0a1a22" stroke-width="1.0" opacity="0.7"/><path d="M359 239 L389 233" stroke="#0a1a22" stroke-width="1.5" opacity="0.7"/><path d="M83 153 L104 156" stroke="#0a1a22" stroke-width="0.8" opacity="0.7"/><path d="M60 95 L70 96" stroke="#0a1a22" stroke-width="1.4" opacity="0.7"/><path d="M488 34 L510 36" stroke="#0a1a22" stroke-width="1.2" opacity="0.7"/><path d="M522 94 L531 91" stroke="#0a1a22" stroke-width="1.3" opacity="0.7"/><path d="M281 229 L306 222" stroke="#0a1a22" stroke-width="1.2" opacity="0.7"/><path d="M141 188 L165 182" stroke="#0a1a22" stroke-width="1.1" opacity="0.7"/><path d="M410 45 L438 33" stroke="#0a1a22" stroke-width="1.3" opacity="0.7"/><path d="M130 115 L200 100 H320 L355 60 L395 100 H470 L520 115 L556 140" stroke="#111" stroke-width="1.6" fill="none"/><path d="M210 0 V100 M245 0 Q260 40 250 100 M470 0 L455 100 M520 0 L556 30" stroke="#111" stroke-width="1" fill="none" opacity="0.7"/><path d="M215 55 Q260 45 300 62 L292 86 Q245 82 212 80Z M372 52 Q430 45 500 65 L495 85 Q430 80 375 70Z" fill="none" stroke="#111" stroke-width="1.1"/></g></svg>
<div class="t " style="left:805.3px;top:854.07px;font-size:20px;font-weight:700;color:#111;letter-spacing:0px;">Scene 21</div>
<div class="r" style="left:905.1px;top:861px;width:5px;height:5px;border-radius:50%;background:#3b3d52"></div>
<div class="t " style="left:924.5px;top:854.07px;font-size:20px;font-weight:700;color:#111;letter-spacing:0px;">Shot 5</div>
<div class="r" style="left:776px;top:1202px;width:554px;height:2px;background:#ededef;"></div>
<div class="r" style="left:776px;top:1251px;width:554px;height:2px;background:#ededef;"></div>
<div class="t " style="left:845px;top:1170.61px;font-size:17px;font-weight:400;color:#1b1b1b;letter-spacing:0.25px;">Exterior shot of the crew on the bridge</div>
<div class="t " style="left:845px;top:1219.11px;font-size:17px;font-weight:400;color:#1b1b1b;letter-spacing:0.25px;">** Ship Docking SFX **</div>
<div class="t " style="left:845px;top:1268.11px;font-size:17px;font-weight:400;color:#1b1b1b;letter-spacing:0.25px;">VFX</div>
<svg style="left:797px;top:1170px" width="26" height="22" viewBox="0 0 26 22"><rect x="0.8" y="1.5" width="23.8" height="3.7" rx="1.85" fill="#575b80"/><rect x="0.8" y="9" width="23.8" height="3.8" rx="1.9" fill="#8c91b0"/><rect x="0.8" y="16.7" width="12.6" height="3.7" rx="1.85" fill="#9aa0bd"/></svg>
<svg style="left:797px;top:1216px" width="24" height="24" viewBox="0 0 24 24"><circle cx="12.35" cy="12.6" r="10.15" fill="#575b80"/><path d="M9.2 7.9 L18.3 12.6 L9.2 17.3Z" fill="#fff"/></svg>
<svg style="left:798px;top:1267px" width="28" height="20" viewBox="0 0 28 20"><rect x="1.2" y="1.9" width="18.8" height="15.9" rx="2.2" fill="#575b80"/><path d="M21 8 L26.7 3.5 V15.7 L21 11.5Z" fill="#b3b6d3"/></svg>
<div class="r" style="left:1362px;top:820px;width:554px;height:490px;background:#fff;border-radius:20px;box-shadow:0 0 0 2px rgba(226,227,233,0.6),0 0 5px 4px rgba(226,227,233,0.4),0 3px 9px 2px rgba(40,40,70,0.035)"></div>
<svg style="left:1360px;top:893px" width="554" height="248" viewBox="0 0 556 251" preserveAspectRatio="none"><defs><clipPath id="cl5"><rect width="556" height="251"/></clipPath></defs><g clip-path="url(#cl5)"><rect width="556" height="251" fill="#030303"/><path d="M0 0 H170 Q175 60 160 90 Q130 115 80 120 Q40 118 0 100Z" fill="#a3a5cc"/><path d="M180 0 H556 V70 L500 75 Q470 55 400 62 Q360 70 320 50 L260 55 Q220 45 180 30Z" fill="#a5a8d0"/><path d="M175 0 H250 L260 40 L210 45 Z" fill="#060606"/><path d="M300 0 Q345 -5 385 20 Q390 60 360 68 Q325 72 315 45Z" fill="#0a0a0a"/><circle cx="352" cy="38" r="28" fill="#a3a5cc"/><path d="M330 30 H375 V60 H330Z" fill="#1a1a22"/><defs><clipPath id="dc6"><path d="M0 0 H170 Q175 60 160 90 Q130 115 80 120 Q40 118 0 100Z"/></clipPath></defs><g clip-path="url(#dc6)"><circle cx="30" cy="30" r="30" fill="none" stroke="#0a0a10" stroke-width="3"/><circle cx="30" cy="30" r="48" fill="none" stroke="#0a0a10" stroke-width="4"/><circle cx="30" cy="30" r="66" fill="none" stroke="#0a0a10" stroke-width="3"/><circle cx="30" cy="30" r="84" fill="none" stroke="#0a0a10" stroke-width="5"/><circle cx="30" cy="30" r="100" fill="none" stroke="#0a0a10" stroke-width="3"/><rect x="120" y="36" width="7" height="4" fill="#0a0a10" transform="rotate(94 120 36)"/><rect x="127" y="47" width="8" height="4" fill="#0a0a10" transform="rotate(100 127 47)"/><rect x="67" y="69" width="3" height="3" fill="#0a0a10" transform="rotate(136 67 69)"/><rect x="52" y="64" width="8" height="3" fill="#0a0a10" transform="rotate(147 52 64)"/><rect x="68" y="38" width="9" height="5" fill="#0a0a10" transform="rotate(102 68 38)"/><rect x="25" y="114" width="3" height="3" fill="#0a0a10" transform="rotate(183 25 114)"/><rect x="61" y="62" width="9" height="3" fill="#0a0a10" transform="rotate(136 61 62)"/><rect x="130" y="34" width="4" height="6" fill="#0a0a10" transform="rotate(92 130 34)"/><rect x="91" y="81" width="5" height="4" fill="#0a0a10" transform="rotate(130 91 81)"/><rect x="68" y="34" width="8" height="3" fill="#0a0a10" transform="rotate(96 68 34)"/><rect x="38" y="81" width="9" height="6" fill="#0a0a10" transform="rotate(171 38 81)"/><rect x="50" y="124" width="6" height="5" fill="#0a0a10" transform="rotate(168 50 124)"/><rect x="103" y="28" width="8" height="3" fill="#0a0a10" transform="rotate(88 103 28)"/><rect x="13" y="135" width="5" height="3" fill="#0a0a10" transform="rotate(189 13 135)"/><rect x="81" y="72" width="9" height="4" fill="#0a0a10" transform="rotate(130 81 72)"/><rect x="71" y="20" width="7" height="6" fill="#0a0a10" transform="rotate(76 71 20)"/><rect x="82" y="83" width="6" height="5" fill="#0a0a10" transform="rotate(135 82 83)"/><rect x="112" y="46" width="6" height="4" fill="#0a0a10" transform="rotate(101 112 46)"/><rect x="78" y="35" width="5" height="6" fill="#0a0a10" transform="rotate(96 78 35)"/><rect x="104" y="67" width="5" height="2" fill="#0a0a10" transform="rotate(117 104 67)"/><rect x="129" y="14" width="8" height="3" fill="#0a0a10" transform="rotate(81 129 14)"/><rect x="62" y="113" width="8" height="6" fill="#0a0a10" transform="rotate(159 62 113)"/><rect x="124" y="94" width="9" height="4" fill="#0a0a10" transform="rotate(124 124 94)"/><rect x="25" y="104" width="5" height="3" fill="#0a0a10" transform="rotate(184 25 104)"/><rect x="27" y="78" width="3" height="5" fill="#0a0a10" transform="rotate(183 27 78)"/><rect x="42" y="103" width="8" height="2" fill="#0a0a10" transform="rotate(170 42 103)"/><rect x="86" y="45" width="6" height="3" fill="#0a0a10" transform="rotate(105 86 45)"/><rect x="91" y="21" width="8" height="6" fill="#0a0a10" transform="rotate(82 91 21)"/><rect x="47" y="101" width="5" height="6" fill="#0a0a10" transform="rotate(167 47 101)"/><rect x="91" y="100" width="3" height="3" fill="#0a0a10" transform="rotate(139 91 100)"/><rect x="33" y="129" width="8" height="4" fill="#0a0a10" transform="rotate(178 33 129)"/><rect x="95" y="78" width="8" height="3" fill="#0a0a10" transform="rotate(127 95 78)"/><rect x="67" y="74" width="8" height="2" fill="#0a0a10" transform="rotate(140 67 74)"/><rect x="70" y="134" width="3" height="4" fill="#0a0a10" transform="rotate(159 70 134)"/><rect x="75" y="123" width="7" height="3" fill="#0a0a10" transform="rotate(154 75 123)"/><rect x="123" y="92" width="8" height="3" fill="#0a0a10" transform="rotate(124 123 92)"/><rect x="72" y="26" width="3" height="4" fill="#0a0a10" transform="rotate(85 72 26)"/><rect x="134" y="31" width="7" height="3" fill="#0a0a10" transform="rotate(91 134 31)"/><rect x="69" y="77" width="6" height="3" fill="#0a0a10" transform="rotate(141 69 77)"/><rect x="80" y="33" width="5" height="5" fill="#0a0a10" transform="rotate(94 80 33)"/><rect x="54" y="61" width="7" height="5" fill="#0a0a10" transform="rotate(142 54 61)"/><rect x="46" y="127" width="3" height="4" fill="#0a0a10" transform="rotate(170 46 127)"/><rect x="125" y="15" width="4" height="5" fill="#0a0a10" transform="rotate(81 125 15)"/><rect x="118" y="53" width="5" height="2" fill="#0a0a10" transform="rotate(105 118 53)"/><rect x="81" y="62" width="8" height="3" fill="#0a0a10" transform="rotate(122 81 62)"/><rect x="85" y="87" width="9" height="2" fill="#0a0a10" transform="rotate(136 85 87)"/><rect x="69" y="95" width="7" height="6" fill="#0a0a10" transform="rotate(149 69 95)"/><rect x="114" y="64" width="6" height="4" fill="#0a0a10" transform="rotate(112 114 64)"/><rect x="129" y="14" width="9" height="3" fill="#0a0a10" transform="rotate(81 129 14)"/><rect x="135" y="75" width="4" height="2" fill="#0a0a10" transform="rotate(113 135 75)"/><rect x="129" y="16" width="8" height="4" fill="#0a0a10" transform="rotate(82 129 16)"/><rect x="48" y="62" width="7" height="4" fill="#0a0a10" transform="rotate(151 48 62)"/><rect x="74" y="79" width="5" height="3" fill="#0a0a10" transform="rotate(138 74 79)"/><rect x="98" y="17" width="4" height="5" fill="#0a0a10" transform="rotate(79 98 17)"/><rect x="37" y="123" width="6" height="3" fill="#0a0a10" transform="rotate(176 37 123)"/><rect x="93" y="69" width="7" height="6" fill="#0a0a10" transform="rotate(121 93 69)"/><rect x="103" y="22" width="6" height="5" fill="#0a0a10" transform="rotate(84 103 22)"/><rect x="21" y="127" width="7" height="5" fill="#0a0a10" transform="rotate(185 21 127)"/><rect x="70" y="125" width="7" height="5" fill="#0a0a10" transform="rotate(157 70 125)"/><rect x="135" y="56" width="5" height="4" fill="#0a0a10" transform="rotate(104 135 56)"/><circle cx="30" cy="30" r="24" fill="#9a9cc6"/><circle cx="30" cy="30" r="18" fill="none" stroke="#0a0a10" stroke-width="3"/></g><path d="M160 90 L175 95 L150 108 L168 110 L140 118 L150 122 L110 125" stroke="#0a0a10" stroke-width="3" fill="none"/><path d="M405 75 Q470 60 556 75 V90 H405Z" fill="#0a0a0a"/><path d="M128 200 Q130 150 150 120 L180 110 Q230 90 265 110 Q275 140 270 200 L255 210 L140 210Z" fill="#9a9cc8"/><path d="M160 150 Q200 135 235 150 L232 200 H162Z" fill="#7a7ca8"/><path d="M172 145 Q200 138 225 148 L225 200 H175Z" fill="#f6f0dc"/><path d="M180 155 Q200 150 220 158 L222 195 H180Z" fill="#fffbe8"/><path d="M0 220 Q100 215 160 200 L240 195 Q300 210 360 225 Q450 230 556 225 V251 H0Z" fill="#c86a20"/><path d="M140 205 L265 198 L300 228 L120 235Z" fill="#e8a040"/><path d="M0 240 H556 V251 H0Z" fill="#d07828"/><path d="M190 232 L188 205 Q184 195 186 185 Q187 172 191 168 Q196 166 197 174 Q199 188 196 205 L197 232Z" fill="#1e0c06"/><path d="M209 238 L206 210 Q203 195 205 180 Q206 168 212 166 Q219 166 220 176 Q222 192 219 210 L218 238Z" fill="#2a1408"/><path d="M188 232 L175 251 H182 L193 232Z M210 238 L200 251 H208 L215 238Z M213 238 L222 251 H230 L218 238Z" fill="#3a1a08"/><path d="M395 95 Q420 90 440 110 L470 200 L460 235 L430 230 L400 150Z" fill="#1c1c26"/><path d="M435 105 L455 150 L445 160 L425 115Z" fill="#9a9cc8" opacity="0.8"/></g></svg>
<div class="t " style="left:1391.3px;top:854.07px;font-size:20px;font-weight:700;color:#111;letter-spacing:0px;">Scene 21</div>
<div class="r" style="left:1491.1px;top:861px;width:5px;height:5px;border-radius:50%;background:#3b3d52"></div>
<div class="t " style="left:1510.5px;top:854.07px;font-size:20px;font-weight:700;color:#111;letter-spacing:0px;">Shot 6</div>
<div class="r" style="left:1362px;top:1202px;width:554px;height:2px;background:#ededef;"></div>
<div class="r" style="left:1362px;top:1251px;width:554px;height:2px;background:#ededef;"></div>
<div class="t " style="left:1431px;top:1170.61px;font-size:17px;font-weight:400;color:#1b1b1b;letter-spacing:0.25px;">Sabrina and the Captain exit the ship</div>
<div class="t " style="left:1431px;top:1219.11px;font-size:17px;font-weight:400;color:#1b1b1b;letter-spacing:0.25px;">** Door Drops **</div>
<div class="t " style="left:1431px;top:1268.11px;font-size:17px;font-weight:400;color:#1b1b1b;letter-spacing:0.25px;">VFX, Backlighting</div>
<svg style="left:1383px;top:1170px" width="26" height="22" viewBox="0 0 26 22"><rect x="0.8" y="1.5" width="23.8" height="3.7" rx="1.85" fill="#575b80"/><rect x="0.8" y="9" width="23.8" height="3.8" rx="1.9" fill="#8c91b0"/><rect x="0.8" y="16.7" width="12.6" height="3.7" rx="1.85" fill="#9aa0bd"/></svg>
<svg style="left:1383px;top:1216px" width="24" height="24" viewBox="0 0 24 24"><circle cx="12.35" cy="12.6" r="10.15" fill="#575b80"/><path d="M9.2 7.9 L18.3 12.6 L9.2 17.3Z" fill="#fff"/></svg>
<svg style="left:1384px;top:1267px" width="28" height="20" viewBox="0 0 28 20"><rect x="1.2" y="1.9" width="18.8" height="15.9" rx="2.2" fill="#575b80"/><path d="M21 8 L26.7 3.5 V15.7 L21 11.5Z" fill="#b3b6d3"/></svg>
</div></div></body></html>
